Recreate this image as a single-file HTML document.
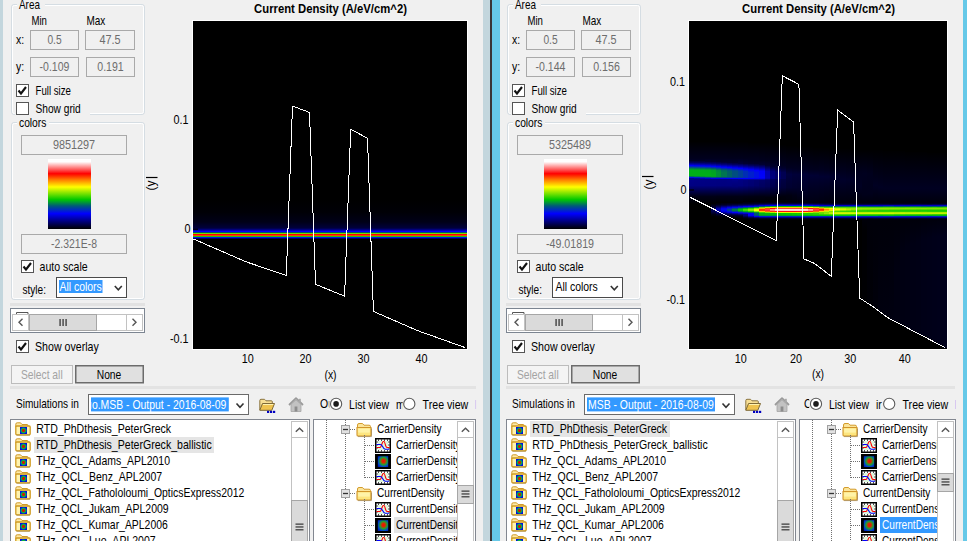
<!DOCTYPE html><html><head><meta charset="utf-8"><title>Current Density viewer</title><style>html,body{margin:0;padding:0;background:#f0f0f0;width:967px;height:541px;overflow:hidden}text{font-family:"Liberation Sans", sans-serif}</style></head><body><svg width="967" height="541" viewBox="0 0 967 541" style="display:block;font-family:'Liberation Sans', sans-serif"><defs><linearGradient id="grad" x1="0" y1="0" x2="0" y2="1"><stop offset="0" stop-color="#ffffff"/><stop offset="0.04" stop-color="#ffffff"/><stop offset="0.21" stop-color="#ff0000"/><stop offset="0.30" stop-color="#ff8000"/><stop offset="0.40" stop-color="#ffff00"/><stop offset="0.58" stop-color="#00c800"/><stop offset="0.67" stop-color="#005a78"/><stop offset="0.78" stop-color="#0000ff"/><stop offset="1" stop-color="#000000"/></linearGradient><radialGradient id="blob"><stop offset="0" stop-color="#ff0000"/><stop offset="0.35" stop-color="#b03000"/><stop offset="0.6" stop-color="#00c040"/><stop offset="1" stop-color="#0010e0"/></radialGradient><radialGradient id="blob2" r="0.75" cx="0.55" cy="0.45"><stop offset="0" stop-color="#ff0000"/><stop offset="0.22" stop-color="#d03000"/><stop offset="0.45" stop-color="#20a030"/><stop offset="0.72" stop-color="#0040d0"/><stop offset="1" stop-color="#0010a0"/></radialGradient><linearGradient id="lband" gradientUnits="userSpaceOnUse" x1="0" y1="200" x2="0" y2="240"><stop offset="0.0000" stop-color="#000000"/><stop offset="0.3000" stop-color="#000006"/><stop offset="0.5500" stop-color="#000018"/><stop offset="0.7000" stop-color="#00003c"/><stop offset="0.7500" stop-color="#000090"/><stop offset="0.7875" stop-color="#0000ff"/><stop offset="0.8150" stop-color="#006050"/><stop offset="0.8325" stop-color="#30d000"/><stop offset="0.8475" stop-color="#ffff00"/><stop offset="0.8625" stop-color="#ff0000"/><stop offset="0.8825" stop-color="#ff0000"/><stop offset="0.9000" stop-color="#f0f000"/><stop offset="0.9150" stop-color="#00c000"/><stop offset="0.9300" stop-color="#0030d0"/><stop offset="0.9450" stop-color="#0000ff"/><stop offset="0.9650" stop-color="#000050"/><stop offset="0.9800" stop-color="#000000"/><stop offset="1.0000" stop-color="#000000"/></linearGradient><linearGradient id="h0" x1="0" y1="0" x2="0" y2="1"><stop offset="0.008" stop-color="#000002"/><stop offset="0.266" stop-color="#00001e"/><stop offset="0.298" stop-color="#000027"/><stop offset="0.331" stop-color="#00005f"/><stop offset="0.363" stop-color="#0000bb"/><stop offset="0.379" stop-color="#0000f5"/><stop offset="0.395" stop-color="#0024c4"/><stop offset="0.427" stop-color="#007b4c"/><stop offset="0.444" stop-color="#009f28"/><stop offset="0.460" stop-color="#00af18"/><stop offset="0.540" stop-color="#00af18"/><stop offset="0.556" stop-color="#007255"/><stop offset="0.573" stop-color="#000ee7"/><stop offset="0.589" stop-color="#000090"/><stop offset="0.621" stop-color="#000088"/><stop offset="0.702" stop-color="#000082"/><stop offset="0.879" stop-color="#000016"/><stop offset="0.992" stop-color="#000002"/></linearGradient><linearGradient id="h1" x1="0" y1="0" x2="0" y2="1"><stop offset="0.008" stop-color="#000002"/><stop offset="0.266" stop-color="#00001e"/><stop offset="0.298" stop-color="#000026"/><stop offset="0.331" stop-color="#000059"/><stop offset="0.363" stop-color="#0000b2"/><stop offset="0.379" stop-color="#0000eb"/><stop offset="0.395" stop-color="#001dcf"/><stop offset="0.427" stop-color="#007354"/><stop offset="0.444" stop-color="#009b2c"/><stop offset="0.460" stop-color="#00ae19"/><stop offset="0.540" stop-color="#00af18"/><stop offset="0.556" stop-color="#008344"/><stop offset="0.573" stop-color="#001ecd"/><stop offset="0.589" stop-color="#0000a3"/><stop offset="0.605" stop-color="#000086"/><stop offset="0.702" stop-color="#000081"/><stop offset="0.879" stop-color="#000016"/><stop offset="0.992" stop-color="#000002"/></linearGradient><linearGradient id="h2" x1="0" y1="0" x2="0" y2="1"><stop offset="0.008" stop-color="#000002"/><stop offset="0.266" stop-color="#00001e"/><stop offset="0.298" stop-color="#000026"/><stop offset="0.331" stop-color="#000053"/><stop offset="0.363" stop-color="#0000aa"/><stop offset="0.379" stop-color="#0000e2"/><stop offset="0.395" stop-color="#0016da"/><stop offset="0.427" stop-color="#006c5b"/><stop offset="0.444" stop-color="#009631"/><stop offset="0.460" stop-color="#00ac1b"/><stop offset="0.540" stop-color="#00af18"/><stop offset="0.556" stop-color="#009235"/><stop offset="0.573" stop-color="#002eb3"/><stop offset="0.589" stop-color="#0000b7"/><stop offset="0.605" stop-color="#000085"/><stop offset="0.702" stop-color="#000081"/><stop offset="0.879" stop-color="#000016"/><stop offset="0.992" stop-color="#000002"/></linearGradient><linearGradient id="h3" x1="0" y1="0" x2="0" y2="1"><stop offset="0.008" stop-color="#000002"/><stop offset="0.266" stop-color="#00001e"/><stop offset="0.315" stop-color="#000032"/><stop offset="0.347" stop-color="#000073"/><stop offset="0.379" stop-color="#0000d8"/><stop offset="0.395" stop-color="#000fe6"/><stop offset="0.427" stop-color="#006364"/><stop offset="0.444" stop-color="#009037"/><stop offset="0.460" stop-color="#00aa1d"/><stop offset="0.540" stop-color="#00af18"/><stop offset="0.556" stop-color="#009e29"/><stop offset="0.573" stop-color="#003e9a"/><stop offset="0.589" stop-color="#0000cc"/><stop offset="0.605" stop-color="#000084"/><stop offset="0.702" stop-color="#000080"/><stop offset="0.879" stop-color="#000016"/><stop offset="0.992" stop-color="#000002"/></linearGradient><linearGradient id="h4" x1="0" y1="0" x2="0" y2="1"><stop offset="0.007" stop-color="#000002"/><stop offset="0.220" stop-color="#00001e"/><stop offset="0.260" stop-color="#00002e"/><stop offset="0.287" stop-color="#00006b"/><stop offset="0.327" stop-color="#0006f5"/><stop offset="0.353" stop-color="#005772"/><stop offset="0.367" stop-color="#008443"/><stop offset="0.380" stop-color="#00a126"/><stop offset="0.447" stop-color="#00a91e"/><stop offset="0.460" stop-color="#00a126"/><stop offset="0.487" stop-color="#0000df"/><stop offset="0.500" stop-color="#000084"/><stop offset="0.580" stop-color="#000080"/><stop offset="0.727" stop-color="#000016"/><stop offset="0.820" stop-color="#000004"/><stop offset="0.860" stop-color="#000027"/><stop offset="0.900" stop-color="#00005b"/><stop offset="0.927" stop-color="#00004c"/><stop offset="0.967" stop-color="#000013"/><stop offset="0.993" stop-color="#000003"/></linearGradient><linearGradient id="h5" x1="0" y1="0" x2="0" y2="1"><stop offset="0.007" stop-color="#000002"/><stop offset="0.217" stop-color="#00001e"/><stop offset="0.257" stop-color="#00002a"/><stop offset="0.283" stop-color="#00005f"/><stop offset="0.309" stop-color="#0000b9"/><stop offset="0.322" stop-color="#0000f0"/><stop offset="0.336" stop-color="#001ece"/><stop offset="0.362" stop-color="#006760"/><stop offset="0.375" stop-color="#008542"/><stop offset="0.401" stop-color="#009037"/><stop offset="0.454" stop-color="#008d3a"/><stop offset="0.467" stop-color="#004a87"/><stop offset="0.480" stop-color="#0000e8"/><stop offset="0.493" stop-color="#000083"/><stop offset="0.572" stop-color="#00007f"/><stop offset="0.717" stop-color="#000015"/><stop offset="0.796" stop-color="#000003"/><stop offset="0.822" stop-color="#000015"/><stop offset="0.849" stop-color="#00004f"/><stop offset="0.875" stop-color="#00009f"/><stop offset="0.888" stop-color="#0000b6"/><stop offset="0.901" stop-color="#0000b3"/><stop offset="0.928" stop-color="#000070"/><stop offset="0.954" stop-color="#000027"/><stop offset="0.980" stop-color="#000007"/><stop offset="0.993" stop-color="#000002"/></linearGradient><linearGradient id="h6" x1="0" y1="0" x2="0" y2="1"><stop offset="0.007" stop-color="#000002"/><stop offset="0.217" stop-color="#00001e"/><stop offset="0.257" stop-color="#00002a"/><stop offset="0.270" stop-color="#000038"/><stop offset="0.296" stop-color="#00007a"/><stop offset="0.322" stop-color="#0000da"/><stop offset="0.336" stop-color="#000ceb"/><stop offset="0.362" stop-color="#004f7f"/><stop offset="0.375" stop-color="#00695e"/><stop offset="0.401" stop-color="#007651"/><stop offset="0.454" stop-color="#007651"/><stop offset="0.467" stop-color="#00478b"/><stop offset="0.480" stop-color="#0000f0"/><stop offset="0.493" stop-color="#000083"/><stop offset="0.572" stop-color="#00007e"/><stop offset="0.717" stop-color="#000015"/><stop offset="0.796" stop-color="#000005"/><stop offset="0.822" stop-color="#000020"/><stop offset="0.836" stop-color="#000042"/><stop offset="0.875" stop-color="#0000ee"/><stop offset="0.888" stop-color="#000bec"/><stop offset="0.901" stop-color="#0008f0"/><stop offset="0.914" stop-color="#0000e3"/><stop offset="0.941" stop-color="#00006a"/><stop offset="0.954" stop-color="#00003a"/><stop offset="0.967" stop-color="#00001b"/><stop offset="0.993" stop-color="#000004"/></linearGradient><linearGradient id="h7" x1="0" y1="0" x2="0" y2="1"><stop offset="0.007" stop-color="#000002"/><stop offset="0.217" stop-color="#00001d"/><stop offset="0.270" stop-color="#000031"/><stop offset="0.296" stop-color="#00006d"/><stop offset="0.336" stop-color="#0000f9"/><stop offset="0.362" stop-color="#003d9c"/><stop offset="0.375" stop-color="#005379"/><stop offset="0.388" stop-color="#005f68"/><stop offset="0.454" stop-color="#006067"/><stop offset="0.467" stop-color="#004491"/><stop offset="0.480" stop-color="#0000f6"/><stop offset="0.493" stop-color="#000086"/><stop offset="0.572" stop-color="#00007e"/><stop offset="0.717" stop-color="#000015"/><stop offset="0.796" stop-color="#000006"/><stop offset="0.822" stop-color="#000029"/><stop offset="0.836" stop-color="#000054"/><stop offset="0.862" stop-color="#0000e5"/><stop offset="0.875" stop-color="#0021c9"/><stop offset="0.888" stop-color="#003f98"/><stop offset="0.901" stop-color="#003b9e"/><stop offset="0.914" stop-color="#0018d7"/><stop offset="0.928" stop-color="#0000d4"/><stop offset="0.941" stop-color="#000087"/><stop offset="0.954" stop-color="#00004a"/><stop offset="0.967" stop-color="#000023"/><stop offset="0.993" stop-color="#000005"/></linearGradient><linearGradient id="h8" x1="0" y1="0" x2="0" y2="1"><stop offset="0.007" stop-color="#000002"/><stop offset="0.217" stop-color="#00001d"/><stop offset="0.270" stop-color="#00002e"/><stop offset="0.296" stop-color="#000061"/><stop offset="0.336" stop-color="#0000e4"/><stop offset="0.349" stop-color="#000ee7"/><stop offset="0.375" stop-color="#004294"/><stop offset="0.388" stop-color="#004d81"/><stop offset="0.454" stop-color="#004f7f"/><stop offset="0.467" stop-color="#003e9a"/><stop offset="0.480" stop-color="#0000fb"/><stop offset="0.493" stop-color="#00008e"/><stop offset="0.520" stop-color="#000085"/><stop offset="0.586" stop-color="#000076"/><stop offset="0.717" stop-color="#000015"/><stop offset="0.796" stop-color="#000007"/><stop offset="0.809" stop-color="#000015"/><stop offset="0.822" stop-color="#000031"/><stop offset="0.836" stop-color="#000066"/><stop offset="0.849" stop-color="#0000b4"/><stop offset="0.862" stop-color="#000ee7"/><stop offset="0.875" stop-color="#004c83"/><stop offset="0.888" stop-color="#007c4b"/><stop offset="0.901" stop-color="#007552"/><stop offset="0.914" stop-color="#004194"/><stop offset="0.928" stop-color="#0000fd"/><stop offset="0.941" stop-color="#0000a2"/><stop offset="0.954" stop-color="#000059"/><stop offset="0.967" stop-color="#00002a"/><stop offset="0.993" stop-color="#000006"/></linearGradient><linearGradient id="h9" x1="0" y1="0" x2="0" y2="1"><stop offset="0.006" stop-color="#000002"/><stop offset="0.214" stop-color="#00001d"/><stop offset="0.279" stop-color="#00003b"/><stop offset="0.318" stop-color="#0000a3"/><stop offset="0.344" stop-color="#0000fd"/><stop offset="0.370" stop-color="#0031af"/><stop offset="0.383" stop-color="#003e9a"/><stop offset="0.448" stop-color="#004096"/><stop offset="0.461" stop-color="#0036a6"/><stop offset="0.474" stop-color="#0000fd"/><stop offset="0.487" stop-color="#000096"/><stop offset="0.500" stop-color="#000082"/><stop offset="0.565" stop-color="#00007c"/><stop offset="0.708" stop-color="#000015"/><stop offset="0.786" stop-color="#000008"/><stop offset="0.799" stop-color="#000018"/><stop offset="0.812" stop-color="#00003a"/><stop offset="0.825" stop-color="#000077"/><stop offset="0.838" stop-color="#0000d2"/><stop offset="0.851" stop-color="#002fb2"/><stop offset="0.864" stop-color="#008641"/><stop offset="0.877" stop-color="#00c502"/><stop offset="0.890" stop-color="#00be09"/><stop offset="0.903" stop-color="#007354"/><stop offset="0.916" stop-color="#001fcc"/><stop offset="0.929" stop-color="#0000be"/><stop offset="0.942" stop-color="#000068"/><stop offset="0.955" stop-color="#000031"/><stop offset="0.968" stop-color="#000014"/><stop offset="0.994" stop-color="#000002"/></linearGradient><linearGradient id="h10" x1="0" y1="0" x2="0" y2="1"><stop offset="0.006" stop-color="#000002"/><stop offset="0.212" stop-color="#00001c"/><stop offset="0.276" stop-color="#000033"/><stop offset="0.314" stop-color="#000091"/><stop offset="0.340" stop-color="#0000e5"/><stop offset="0.353" stop-color="#0009ef"/><stop offset="0.378" stop-color="#002db6"/><stop offset="0.442" stop-color="#0030b0"/><stop offset="0.455" stop-color="#002bb8"/><stop offset="0.468" stop-color="#0000fc"/><stop offset="0.481" stop-color="#00009b"/><stop offset="0.494" stop-color="#00007c"/><stop offset="0.558" stop-color="#000077"/><stop offset="0.699" stop-color="#000014"/><stop offset="0.763" stop-color="#000004"/><stop offset="0.788" stop-color="#00001b"/><stop offset="0.801" stop-color="#000041"/><stop offset="0.814" stop-color="#000086"/><stop offset="0.827" stop-color="#0000ed"/><stop offset="0.840" stop-color="#004c84"/><stop offset="0.853" stop-color="#00bf08"/><stop offset="0.865" stop-color="#48d700"/><stop offset="0.878" stop-color="#3fd500"/><stop offset="0.891" stop-color="#00aa1d"/><stop offset="0.904" stop-color="#003aa1"/><stop offset="0.917" stop-color="#0000d6"/><stop offset="0.929" stop-color="#000084"/><stop offset="0.942" stop-color="#00007b"/><stop offset="0.968" stop-color="#000024"/><stop offset="0.981" stop-color="#00000b"/><stop offset="0.994" stop-color="#000002"/></linearGradient><linearGradient id="h11" x1="0" y1="0" x2="0" y2="1"><stop offset="0.006" stop-color="#000002"/><stop offset="0.214" stop-color="#00001e"/><stop offset="0.266" stop-color="#00002e"/><stop offset="0.292" stop-color="#00005f"/><stop offset="0.344" stop-color="#0000f4"/><stop offset="0.383" stop-color="#0020ca"/><stop offset="0.448" stop-color="#001ecd"/><stop offset="0.461" stop-color="#0000f7"/><stop offset="0.474" stop-color="#00009e"/><stop offset="0.487" stop-color="#000076"/><stop offset="0.552" stop-color="#000071"/><stop offset="0.695" stop-color="#000013"/><stop offset="0.760" stop-color="#000003"/><stop offset="0.786" stop-color="#00001e"/><stop offset="0.799" stop-color="#000049"/><stop offset="0.812" stop-color="#000095"/><stop offset="0.825" stop-color="#0006f4"/><stop offset="0.838" stop-color="#007057"/><stop offset="0.851" stop-color="#38d400"/><stop offset="0.864" stop-color="#94e800"/><stop offset="0.877" stop-color="#89e500"/><stop offset="0.890" stop-color="#1cce00"/><stop offset="0.903" stop-color="#005575"/><stop offset="0.916" stop-color="#0001fc"/><stop offset="0.942" stop-color="#0000f0"/><stop offset="0.968" stop-color="#000047"/><stop offset="0.981" stop-color="#000016"/><stop offset="0.994" stop-color="#000004"/></linearGradient><linearGradient id="h12" x1="0" y1="0" x2="0" y2="1"><stop offset="0.006" stop-color="#000002"/><stop offset="0.227" stop-color="#000020"/><stop offset="0.266" stop-color="#00002c"/><stop offset="0.292" stop-color="#000054"/><stop offset="0.357" stop-color="#0000fb"/><stop offset="0.383" stop-color="#0011e2"/><stop offset="0.448" stop-color="#0011e2"/><stop offset="0.461" stop-color="#0000f1"/><stop offset="0.474" stop-color="#0000a1"/><stop offset="0.487" stop-color="#000070"/><stop offset="0.552" stop-color="#00006b"/><stop offset="0.695" stop-color="#000012"/><stop offset="0.760" stop-color="#000004"/><stop offset="0.786" stop-color="#000023"/><stop offset="0.799" stop-color="#000054"/><stop offset="0.812" stop-color="#0000ad"/><stop offset="0.825" stop-color="#0024c4"/><stop offset="0.838" stop-color="#00b413"/><stop offset="0.851" stop-color="#a0ea00"/><stop offset="0.864" stop-color="#fff400"/><stop offset="0.877" stop-color="#fdfe00"/><stop offset="0.890" stop-color="#7fe300"/><stop offset="0.903" stop-color="#009136"/><stop offset="0.916" stop-color="#005a6e"/><stop offset="0.929" stop-color="#005a6e"/><stop offset="0.942" stop-color="#00488a"/><stop offset="0.955" stop-color="#0000eb"/><stop offset="0.968" stop-color="#00006a"/><stop offset="0.981" stop-color="#000021"/><stop offset="0.994" stop-color="#000007"/></linearGradient><linearGradient id="h13" x1="0" y1="0" x2="0" y2="1"><stop offset="0.006" stop-color="#000002"/><stop offset="0.227" stop-color="#00001e"/><stop offset="0.279" stop-color="#000033"/><stop offset="0.318" stop-color="#000085"/><stop offset="0.357" stop-color="#0000e5"/><stop offset="0.370" stop-color="#0000f9"/><stop offset="0.448" stop-color="#0003fa"/><stop offset="0.461" stop-color="#0000e9"/><stop offset="0.474" stop-color="#0000a2"/><stop offset="0.487" stop-color="#00006a"/><stop offset="0.565" stop-color="#00005f"/><stop offset="0.695" stop-color="#000011"/><stop offset="0.760" stop-color="#000005"/><stop offset="0.773" stop-color="#000010"/><stop offset="0.786" stop-color="#00002c"/><stop offset="0.799" stop-color="#000069"/><stop offset="0.812" stop-color="#0000d7"/><stop offset="0.825" stop-color="#00586f"/><stop offset="0.838" stop-color="#74e100"/><stop offset="0.851" stop-color="#ffaa00"/><stop offset="0.864" stop-color="#ff2d00"/><stop offset="0.877" stop-color="#ff3c00"/><stop offset="0.890" stop-color="#ffd000"/><stop offset="0.903" stop-color="#42d600"/><stop offset="0.916" stop-color="#00b116"/><stop offset="0.929" stop-color="#00b116"/><stop offset="0.942" stop-color="#009136"/><stop offset="0.955" stop-color="#0016da"/><stop offset="0.968" stop-color="#000081"/><stop offset="0.981" stop-color="#000028"/><stop offset="0.994" stop-color="#000008"/></linearGradient><linearGradient id="h14" x1="0" y1="0" x2="0" y2="1"><stop offset="0.006" stop-color="#000002"/><stop offset="0.227" stop-color="#00001c"/><stop offset="0.292" stop-color="#000031"/><stop offset="0.370" stop-color="#0000ae"/><stop offset="0.448" stop-color="#0000b7"/><stop offset="0.461" stop-color="#0000ab"/><stop offset="0.474" stop-color="#00007c"/><stop offset="0.487" stop-color="#000062"/><stop offset="0.565" stop-color="#000058"/><stop offset="0.708" stop-color="#00000c"/><stop offset="0.760" stop-color="#000005"/><stop offset="0.773" stop-color="#000011"/><stop offset="0.786" stop-color="#000031"/><stop offset="0.799" stop-color="#000074"/><stop offset="0.812" stop-color="#0000ee"/><stop offset="0.825" stop-color="#008443"/><stop offset="0.838" stop-color="#c1f100"/><stop offset="0.851" stop-color="#ff4a00"/><stop offset="0.864" stop-color="#ff4343"/><stop offset="0.877" stop-color="#ff3232"/><stop offset="0.890" stop-color="#ff7400"/><stop offset="0.903" stop-color="#89e500"/><stop offset="0.916" stop-color="#00b611"/><stop offset="0.929" stop-color="#00b611"/><stop offset="0.942" stop-color="#009631"/><stop offset="0.955" stop-color="#0018d7"/><stop offset="0.968" stop-color="#000083"/><stop offset="0.981" stop-color="#000028"/><stop offset="0.994" stop-color="#000008"/></linearGradient><linearGradient id="h15" x1="0" y1="0" x2="0" y2="1"><stop offset="0.007" stop-color="#000002"/><stop offset="0.243" stop-color="#00001f"/><stop offset="0.296" stop-color="#00002d"/><stop offset="0.362" stop-color="#000078"/><stop offset="0.441" stop-color="#000080"/><stop offset="0.454" stop-color="#00007a"/><stop offset="0.467" stop-color="#00005c"/><stop offset="0.559" stop-color="#00004f"/><stop offset="0.704" stop-color="#00000a"/><stop offset="0.757" stop-color="#000006"/><stop offset="0.770" stop-color="#000013"/><stop offset="0.783" stop-color="#000034"/><stop offset="0.796" stop-color="#00007d"/><stop offset="0.809" stop-color="#0000fd"/><stop offset="0.822" stop-color="#00a324"/><stop offset="0.836" stop-color="#f9fd00"/><stop offset="0.849" stop-color="#ff0300"/><stop offset="0.862" stop-color="#ff9898"/><stop offset="0.875" stop-color="#ff8686"/><stop offset="0.888" stop-color="#ff3100"/><stop offset="0.901" stop-color="#bef100"/><stop offset="0.914" stop-color="#00bc0b"/><stop offset="0.928" stop-color="#00bc0b"/><stop offset="0.941" stop-color="#009b2c"/><stop offset="0.954" stop-color="#001bd3"/><stop offset="0.967" stop-color="#000084"/><stop offset="0.980" stop-color="#000029"/><stop offset="0.993" stop-color="#000008"/></linearGradient><linearGradient id="h16" x1="0" y1="0" x2="0" y2="1"><stop offset="0.007" stop-color="#000002"/><stop offset="0.260" stop-color="#000022"/><stop offset="0.300" stop-color="#000030"/><stop offset="0.367" stop-color="#000068"/><stop offset="0.447" stop-color="#000067"/><stop offset="0.460" stop-color="#000051"/><stop offset="0.567" stop-color="#000041"/><stop offset="0.700" stop-color="#000009"/><stop offset="0.753" stop-color="#000006"/><stop offset="0.767" stop-color="#000014"/><stop offset="0.780" stop-color="#000037"/><stop offset="0.793" stop-color="#000084"/><stop offset="0.807" stop-color="#000aed"/><stop offset="0.820" stop-color="#00be09"/><stop offset="0.833" stop-color="#ffd600"/><stop offset="0.847" stop-color="#ff3b3b"/><stop offset="0.860" stop-color="#ffe1e1"/><stop offset="0.873" stop-color="#ffcdcd"/><stop offset="0.887" stop-color="#ff0808"/><stop offset="0.900" stop-color="#ebfa00"/><stop offset="0.913" stop-color="#00c106"/><stop offset="0.927" stop-color="#00c106"/><stop offset="0.940" stop-color="#00a027"/><stop offset="0.953" stop-color="#001dcf"/><stop offset="0.967" stop-color="#000086"/><stop offset="0.980" stop-color="#000029"/><stop offset="0.993" stop-color="#000008"/></linearGradient><linearGradient id="h17" x1="0" y1="0" x2="0" y2="1"><stop offset="0.007" stop-color="#000002"/><stop offset="0.273" stop-color="#000020"/><stop offset="0.313" stop-color="#00002f"/><stop offset="0.367" stop-color="#000052"/><stop offset="0.447" stop-color="#000053"/><stop offset="0.460" stop-color="#000044"/><stop offset="0.567" stop-color="#000039"/><stop offset="0.687" stop-color="#00000d"/><stop offset="0.753" stop-color="#000008"/><stop offset="0.767" stop-color="#000014"/><stop offset="0.780" stop-color="#000037"/><stop offset="0.793" stop-color="#000084"/><stop offset="0.807" stop-color="#000aed"/><stop offset="0.820" stop-color="#00be09"/><stop offset="0.833" stop-color="#ffd600"/><stop offset="0.847" stop-color="#ff3b3b"/><stop offset="0.860" stop-color="#ffe1e1"/><stop offset="0.873" stop-color="#ffcdcd"/><stop offset="0.887" stop-color="#ff0808"/><stop offset="0.900" stop-color="#ebfa00"/><stop offset="0.913" stop-color="#00c700"/><stop offset="0.927" stop-color="#00c700"/><stop offset="0.940" stop-color="#00a522"/><stop offset="0.953" stop-color="#001fcc"/><stop offset="0.967" stop-color="#000087"/><stop offset="0.980" stop-color="#000029"/><stop offset="0.993" stop-color="#000008"/></linearGradient><linearGradient id="h18" x1="0" y1="0" x2="0" y2="1"><stop offset="0.007" stop-color="#000002"/><stop offset="0.291" stop-color="#000020"/><stop offset="0.385" stop-color="#00003e"/><stop offset="0.561" stop-color="#000030"/><stop offset="0.669" stop-color="#000011"/><stop offset="0.750" stop-color="#00000a"/><stop offset="0.764" stop-color="#000014"/><stop offset="0.777" stop-color="#000037"/><stop offset="0.791" stop-color="#000084"/><stop offset="0.804" stop-color="#000aed"/><stop offset="0.818" stop-color="#00be09"/><stop offset="0.831" stop-color="#ffd600"/><stop offset="0.845" stop-color="#ff3b3b"/><stop offset="0.858" stop-color="#ffe1e1"/><stop offset="0.872" stop-color="#ffcdcd"/><stop offset="0.885" stop-color="#ff0808"/><stop offset="0.899" stop-color="#ebfa00"/><stop offset="0.912" stop-color="#05c900"/><stop offset="0.926" stop-color="#05c900"/><stop offset="0.939" stop-color="#00aa1d"/><stop offset="0.953" stop-color="#0021c8"/><stop offset="0.966" stop-color="#000088"/><stop offset="0.980" stop-color="#00002a"/><stop offset="0.993" stop-color="#000009"/></linearGradient><linearGradient id="h19" x1="0" y1="0" x2="0" y2="1"><stop offset="0.007" stop-color="#000002"/><stop offset="0.304" stop-color="#000021"/><stop offset="0.385" stop-color="#000038"/><stop offset="0.561" stop-color="#00002d"/><stop offset="0.669" stop-color="#000015"/><stop offset="0.750" stop-color="#00000c"/><stop offset="0.764" stop-color="#000014"/><stop offset="0.777" stop-color="#000037"/><stop offset="0.791" stop-color="#000084"/><stop offset="0.804" stop-color="#000aed"/><stop offset="0.818" stop-color="#00be09"/><stop offset="0.831" stop-color="#ffd600"/><stop offset="0.845" stop-color="#ff3b3b"/><stop offset="0.858" stop-color="#ffe1e1"/><stop offset="0.872" stop-color="#ffcdcd"/><stop offset="0.885" stop-color="#ff0808"/><stop offset="0.899" stop-color="#ebfa00"/><stop offset="0.912" stop-color="#0cca00"/><stop offset="0.926" stop-color="#0cca00"/><stop offset="0.939" stop-color="#00b017"/><stop offset="0.953" stop-color="#0024c4"/><stop offset="0.966" stop-color="#00008a"/><stop offset="0.980" stop-color="#00002a"/><stop offset="0.993" stop-color="#000009"/></linearGradient><linearGradient id="h20" x1="0" y1="0" x2="0" y2="1"><stop offset="0.007" stop-color="#000002"/><stop offset="0.308" stop-color="#000022"/><stop offset="0.377" stop-color="#000037"/><stop offset="0.555" stop-color="#00002b"/><stop offset="0.747" stop-color="#00000e"/><stop offset="0.760" stop-color="#000014"/><stop offset="0.774" stop-color="#000037"/><stop offset="0.788" stop-color="#000084"/><stop offset="0.801" stop-color="#000aed"/><stop offset="0.815" stop-color="#00be09"/><stop offset="0.829" stop-color="#ffd600"/><stop offset="0.842" stop-color="#ff3b3b"/><stop offset="0.856" stop-color="#ffe1e1"/><stop offset="0.870" stop-color="#ffcdcd"/><stop offset="0.884" stop-color="#ff0808"/><stop offset="0.897" stop-color="#ebfa00"/><stop offset="0.911" stop-color="#12cb00"/><stop offset="0.925" stop-color="#12cb00"/><stop offset="0.938" stop-color="#00b512"/><stop offset="0.952" stop-color="#0026c1"/><stop offset="0.966" stop-color="#00008b"/><stop offset="0.979" stop-color="#00002b"/><stop offset="0.993" stop-color="#000009"/></linearGradient><linearGradient id="h21" x1="0" y1="0" x2="0" y2="1"><stop offset="0.007" stop-color="#000002"/><stop offset="0.308" stop-color="#000020"/><stop offset="0.377" stop-color="#000035"/><stop offset="0.555" stop-color="#000029"/><stop offset="0.760" stop-color="#000014"/><stop offset="0.774" stop-color="#000037"/><stop offset="0.788" stop-color="#000084"/><stop offset="0.801" stop-color="#000aed"/><stop offset="0.815" stop-color="#00be09"/><stop offset="0.829" stop-color="#ffd600"/><stop offset="0.842" stop-color="#ff3b3b"/><stop offset="0.856" stop-color="#ffe1e1"/><stop offset="0.870" stop-color="#ffcdcd"/><stop offset="0.884" stop-color="#ff0808"/><stop offset="0.897" stop-color="#ebfa00"/><stop offset="0.911" stop-color="#18cd00"/><stop offset="0.925" stop-color="#18cd00"/><stop offset="0.938" stop-color="#00ba0d"/><stop offset="0.952" stop-color="#0028bd"/><stop offset="0.966" stop-color="#00008d"/><stop offset="0.979" stop-color="#00002b"/><stop offset="0.993" stop-color="#000009"/></linearGradient><linearGradient id="h22" x1="0" y1="0" x2="0" y2="1"><stop offset="0.007" stop-color="#000002"/><stop offset="0.308" stop-color="#00001e"/><stop offset="0.390" stop-color="#000033"/><stop offset="0.568" stop-color="#000023"/><stop offset="0.760" stop-color="#000013"/><stop offset="0.774" stop-color="#000035"/><stop offset="0.788" stop-color="#00007e"/><stop offset="0.801" stop-color="#0003fa"/><stop offset="0.815" stop-color="#00a91e"/><stop offset="0.829" stop-color="#fff900"/><stop offset="0.842" stop-color="#ff0a0a"/><stop offset="0.856" stop-color="#ffa9a9"/><stop offset="0.870" stop-color="#ff9696"/><stop offset="0.884" stop-color="#ff2400"/><stop offset="0.897" stop-color="#c8f300"/><stop offset="0.911" stop-color="#1fce00"/><stop offset="0.925" stop-color="#1fce00"/><stop offset="0.938" stop-color="#00bf08"/><stop offset="0.952" stop-color="#002ab9"/><stop offset="0.966" stop-color="#00008e"/><stop offset="0.979" stop-color="#00002c"/><stop offset="0.993" stop-color="#000009"/></linearGradient><linearGradient id="h23" x1="0" y1="0" x2="0" y2="1"><stop offset="0.007" stop-color="#000002"/><stop offset="0.299" stop-color="#00001d"/><stop offset="0.382" stop-color="#000032"/><stop offset="0.757" stop-color="#000012"/><stop offset="0.771" stop-color="#000031"/><stop offset="0.785" stop-color="#000075"/><stop offset="0.799" stop-color="#0000ef"/><stop offset="0.812" stop-color="#008542"/><stop offset="0.826" stop-color="#c5f200"/><stop offset="0.840" stop-color="#ff4200"/><stop offset="0.854" stop-color="#ff4949"/><stop offset="0.868" stop-color="#ff3535"/><stop offset="0.882" stop-color="#ff7100"/><stop offset="0.896" stop-color="#92e700"/><stop offset="0.910" stop-color="#2ed100"/><stop offset="0.924" stop-color="#27d000"/><stop offset="0.938" stop-color="#00c403"/><stop offset="0.951" stop-color="#002db6"/><stop offset="0.965" stop-color="#000090"/><stop offset="0.979" stop-color="#00002c"/><stop offset="0.993" stop-color="#000009"/></linearGradient><linearGradient id="h24" x1="0" y1="0" x2="0" y2="1"><stop offset="0.007" stop-color="#000002"/><stop offset="0.312" stop-color="#000020"/><stop offset="0.396" stop-color="#000030"/><stop offset="0.757" stop-color="#000010"/><stop offset="0.771" stop-color="#00002b"/><stop offset="0.785" stop-color="#000067"/><stop offset="0.799" stop-color="#0000d4"/><stop offset="0.812" stop-color="#006a5d"/><stop offset="0.826" stop-color="#7be200"/><stop offset="0.840" stop-color="#ff9100"/><stop offset="0.854" stop-color="#ff2600"/><stop offset="0.868" stop-color="#ff4700"/><stop offset="0.882" stop-color="#ffd500"/><stop offset="0.896" stop-color="#6ade00"/><stop offset="0.910" stop-color="#64dd00"/><stop offset="0.938" stop-color="#00c800"/><stop offset="0.951" stop-color="#002eb3"/><stop offset="0.965" stop-color="#000091"/><stop offset="0.979" stop-color="#00002c"/><stop offset="0.993" stop-color="#000009"/></linearGradient><linearGradient id="h25" x1="0" y1="0" x2="0" y2="1"><stop offset="0.007" stop-color="#000002"/><stop offset="0.312" stop-color="#00001e"/><stop offset="0.396" stop-color="#00002f"/><stop offset="0.757" stop-color="#00000e"/><stop offset="0.771" stop-color="#000026"/><stop offset="0.785" stop-color="#00005a"/><stop offset="0.799" stop-color="#0000cf"/><stop offset="0.812" stop-color="#006a5d"/><stop offset="0.826" stop-color="#42d600"/><stop offset="0.840" stop-color="#ffde00"/><stop offset="0.854" stop-color="#ff9100"/><stop offset="0.868" stop-color="#ffbf00"/><stop offset="0.882" stop-color="#c3f200"/><stop offset="0.896" stop-color="#83e400"/><stop offset="0.910" stop-color="#94e700"/><stop offset="0.924" stop-color="#3fd500"/><stop offset="0.938" stop-color="#00c601"/><stop offset="0.951" stop-color="#002db5"/><stop offset="0.965" stop-color="#000090"/><stop offset="0.979" stop-color="#00002c"/><stop offset="0.993" stop-color="#000009"/></linearGradient><linearGradient id="h26" x1="0" y1="0" x2="0" y2="1"><stop offset="0.007" stop-color="#000002"/><stop offset="0.303" stop-color="#00001c"/><stop offset="0.387" stop-color="#00002d"/><stop offset="0.754" stop-color="#00000d"/><stop offset="0.768" stop-color="#000022"/><stop offset="0.782" stop-color="#000051"/><stop offset="0.796" stop-color="#0000cf"/><stop offset="0.810" stop-color="#006a5d"/><stop offset="0.824" stop-color="#4fd900"/><stop offset="0.838" stop-color="#f3fc00"/><stop offset="0.852" stop-color="#ffd400"/><stop offset="0.866" stop-color="#ebfa00"/><stop offset="0.880" stop-color="#7ee300"/><stop offset="0.894" stop-color="#abed00"/><stop offset="0.908" stop-color="#c3f200"/><stop offset="0.923" stop-color="#48d700"/><stop offset="0.937" stop-color="#00c502"/><stop offset="0.951" stop-color="#002cb6"/><stop offset="0.965" stop-color="#000090"/><stop offset="0.979" stop-color="#00002c"/><stop offset="0.993" stop-color="#000009"/></linearGradient><linearGradient id="h27" x1="0" y1="0" x2="0" y2="1"><stop offset="0.007" stop-color="#000002"/><stop offset="0.303" stop-color="#00001a"/><stop offset="0.387" stop-color="#00002b"/><stop offset="0.754" stop-color="#00000d"/><stop offset="0.768" stop-color="#00001f"/><stop offset="0.782" stop-color="#00004b"/><stop offset="0.796" stop-color="#0000ce"/><stop offset="0.810" stop-color="#00695e"/><stop offset="0.824" stop-color="#54da00"/><stop offset="0.838" stop-color="#cef400"/><stop offset="0.852" stop-color="#f7fd00"/><stop offset="0.866" stop-color="#afed00"/><stop offset="0.880" stop-color="#4dd800"/><stop offset="0.894" stop-color="#c0f100"/><stop offset="0.908" stop-color="#dcf700"/><stop offset="0.923" stop-color="#4cd800"/><stop offset="0.937" stop-color="#00c304"/><stop offset="0.951" stop-color="#002bb8"/><stop offset="0.965" stop-color="#00008f"/><stop offset="0.979" stop-color="#00002c"/><stop offset="0.993" stop-color="#000009"/></linearGradient><linearGradient id="h28" x1="0" y1="0" x2="0" y2="1"><stop offset="0.007" stop-color="#000002"/><stop offset="0.317" stop-color="#00001e"/><stop offset="0.430" stop-color="#00002a"/><stop offset="0.754" stop-color="#00000d"/><stop offset="0.768" stop-color="#00001e"/><stop offset="0.782" stop-color="#000049"/><stop offset="0.796" stop-color="#0000cd"/><stop offset="0.810" stop-color="#006760"/><stop offset="0.824" stop-color="#51d900"/><stop offset="0.838" stop-color="#b4ee00"/><stop offset="0.852" stop-color="#d9f600"/><stop offset="0.866" stop-color="#91e700"/><stop offset="0.880" stop-color="#39d400"/><stop offset="0.894" stop-color="#bdf000"/><stop offset="0.908" stop-color="#d9f600"/><stop offset="0.923" stop-color="#49d700"/><stop offset="0.937" stop-color="#00c106"/><stop offset="0.951" stop-color="#002bb9"/><stop offset="0.965" stop-color="#00008e"/><stop offset="0.979" stop-color="#00002c"/><stop offset="0.993" stop-color="#000009"/></linearGradient><linearGradient id="h29" x1="0" y1="0" x2="0" y2="1"><stop offset="0.007" stop-color="#000002"/><stop offset="0.317" stop-color="#00001c"/><stop offset="0.430" stop-color="#000028"/><stop offset="0.754" stop-color="#00000d"/><stop offset="0.768" stop-color="#00001d"/><stop offset="0.782" stop-color="#000049"/><stop offset="0.796" stop-color="#0000cc"/><stop offset="0.810" stop-color="#006562"/><stop offset="0.824" stop-color="#4fd900"/><stop offset="0.838" stop-color="#9be900"/><stop offset="0.852" stop-color="#bbf000"/><stop offset="0.880" stop-color="#37d300"/><stop offset="0.894" stop-color="#baf000"/><stop offset="0.908" stop-color="#d7f600"/><stop offset="0.923" stop-color="#47d700"/><stop offset="0.937" stop-color="#00bf08"/><stop offset="0.951" stop-color="#002abb"/><stop offset="0.965" stop-color="#00008e"/><stop offset="0.979" stop-color="#00002c"/><stop offset="0.993" stop-color="#000009"/></linearGradient><linearGradient id="h30" x1="0" y1="0" x2="0" y2="1"><stop offset="0.007" stop-color="#000002"/><stop offset="0.307" stop-color="#00001a"/><stop offset="0.421" stop-color="#000027"/><stop offset="0.750" stop-color="#00000d"/><stop offset="0.764" stop-color="#00001c"/><stop offset="0.779" stop-color="#000049"/><stop offset="0.793" stop-color="#0000cc"/><stop offset="0.807" stop-color="#006562"/><stop offset="0.821" stop-color="#4ed800"/><stop offset="0.836" stop-color="#9ae900"/><stop offset="0.850" stop-color="#9de900"/><stop offset="0.864" stop-color="#55da00"/><stop offset="0.879" stop-color="#35d300"/><stop offset="0.893" stop-color="#b9f000"/><stop offset="0.907" stop-color="#d5f600"/><stop offset="0.921" stop-color="#45d700"/><stop offset="0.936" stop-color="#00be09"/><stop offset="0.950" stop-color="#0029bb"/><stop offset="0.964" stop-color="#00008d"/><stop offset="0.979" stop-color="#00002b"/><stop offset="0.993" stop-color="#000009"/></linearGradient><linearGradient id="h31" x1="0" y1="0" x2="0" y2="1"><stop offset="0.007" stop-color="#000002"/><stop offset="0.321" stop-color="#00001d"/><stop offset="0.521" stop-color="#000022"/><stop offset="0.750" stop-color="#00000d"/><stop offset="0.764" stop-color="#00001a"/><stop offset="0.779" stop-color="#000049"/><stop offset="0.793" stop-color="#0000cb"/><stop offset="0.807" stop-color="#006463"/><stop offset="0.821" stop-color="#4dd800"/><stop offset="0.836" stop-color="#99e900"/><stop offset="0.850" stop-color="#7ee300"/><stop offset="0.864" stop-color="#37d400"/><stop offset="0.879" stop-color="#34d300"/><stop offset="0.893" stop-color="#b8ef00"/><stop offset="0.907" stop-color="#d5f500"/><stop offset="0.921" stop-color="#45d600"/><stop offset="0.936" stop-color="#00bd0a"/><stop offset="0.950" stop-color="#0029bc"/><stop offset="0.964" stop-color="#00008d"/><stop offset="0.979" stop-color="#00002b"/><stop offset="0.993" stop-color="#000009"/></linearGradient><linearGradient id="h32" x1="0" y1="0" x2="0" y2="1"><stop offset="0.003" stop-color="#000002"/><stop offset="0.156" stop-color="#00001f"/><stop offset="0.295" stop-color="#00001a"/><stop offset="0.348" stop-color="#00000d"/><stop offset="0.354" stop-color="#00001a"/><stop offset="0.361" stop-color="#000049"/><stop offset="0.368" stop-color="#0000cb"/><stop offset="0.374" stop-color="#006463"/><stop offset="0.381" stop-color="#4cd800"/><stop offset="0.387" stop-color="#98e800"/><stop offset="0.394" stop-color="#76e100"/><stop offset="0.401" stop-color="#30d200"/><stop offset="0.407" stop-color="#34d300"/><stop offset="0.414" stop-color="#b8ef00"/><stop offset="0.421" stop-color="#d4f500"/><stop offset="0.427" stop-color="#44d600"/><stop offset="0.434" stop-color="#00bc0b"/><stop offset="0.440" stop-color="#0029bc"/><stop offset="0.447" stop-color="#00008d"/><stop offset="0.454" stop-color="#00002b"/><stop offset="0.460" stop-color="#000009"/><stop offset="0.533" stop-color="#000003"/><stop offset="0.997" stop-color="#000003"/></linearGradient><linearGradient id="h33" x1="0" y1="0" x2="0" y2="1"><stop offset="0.003" stop-color="#000002"/><stop offset="0.152" stop-color="#00001d"/><stop offset="0.281" stop-color="#00001b"/><stop offset="0.339" stop-color="#00000d"/><stop offset="0.345" stop-color="#00001a"/><stop offset="0.352" stop-color="#000049"/><stop offset="0.358" stop-color="#0000cb"/><stop offset="0.365" stop-color="#006364"/><stop offset="0.371" stop-color="#4bd800"/><stop offset="0.377" stop-color="#98e800"/><stop offset="0.384" stop-color="#73e000"/><stop offset="0.390" stop-color="#2cd100"/><stop offset="0.397" stop-color="#33d300"/><stop offset="0.403" stop-color="#b7ef00"/><stop offset="0.410" stop-color="#d3f500"/><stop offset="0.416" stop-color="#43d600"/><stop offset="0.423" stop-color="#00bc0b"/><stop offset="0.429" stop-color="#0028bd"/><stop offset="0.435" stop-color="#00008d"/><stop offset="0.442" stop-color="#00002b"/><stop offset="0.448" stop-color="#000009"/><stop offset="0.997" stop-color="#000006"/></linearGradient><linearGradient id="h34" x1="0" y1="0" x2="0" y2="1"><stop offset="0.003" stop-color="#000002"/><stop offset="0.225" stop-color="#000022"/><stop offset="0.332" stop-color="#00000d"/><stop offset="0.339" stop-color="#00001a"/><stop offset="0.345" stop-color="#000049"/><stop offset="0.351" stop-color="#0000cb"/><stop offset="0.358" stop-color="#006364"/><stop offset="0.364" stop-color="#4ad800"/><stop offset="0.370" stop-color="#97e800"/><stop offset="0.377" stop-color="#6fe000"/><stop offset="0.383" stop-color="#29d000"/><stop offset="0.389" stop-color="#32d200"/><stop offset="0.396" stop-color="#b6ef00"/><stop offset="0.402" stop-color="#d2f500"/><stop offset="0.408" stop-color="#42d600"/><stop offset="0.415" stop-color="#00bb0c"/><stop offset="0.421" stop-color="#0028bd"/><stop offset="0.427" stop-color="#00008d"/><stop offset="0.434" stop-color="#00002b"/><stop offset="0.440" stop-color="#000009"/><stop offset="0.997" stop-color="#00000a"/></linearGradient><linearGradient id="h35" x1="0" y1="0" x2="0" y2="1"><stop offset="0.003" stop-color="#000002"/><stop offset="0.231" stop-color="#000022"/><stop offset="0.324" stop-color="#00000d"/><stop offset="0.330" stop-color="#00001a"/><stop offset="0.336" stop-color="#000049"/><stop offset="0.343" stop-color="#0000ca"/><stop offset="0.349" stop-color="#006265"/><stop offset="0.355" stop-color="#4ad800"/><stop offset="0.361" stop-color="#96e800"/><stop offset="0.367" stop-color="#6cdf00"/><stop offset="0.373" stop-color="#25d000"/><stop offset="0.380" stop-color="#31d200"/><stop offset="0.386" stop-color="#b5ef00"/><stop offset="0.392" stop-color="#d2f500"/><stop offset="0.398" stop-color="#41d600"/><stop offset="0.404" stop-color="#00bb0c"/><stop offset="0.410" stop-color="#0028be"/><stop offset="0.417" stop-color="#00008d"/><stop offset="0.423" stop-color="#00002b"/><stop offset="0.429" stop-color="#000009"/><stop offset="0.997" stop-color="#00000e"/></linearGradient><linearGradient id="h36" x1="0" y1="0" x2="0" y2="1"><stop offset="0.003" stop-color="#000002"/><stop offset="0.227" stop-color="#000021"/><stop offset="0.312" stop-color="#00000d"/><stop offset="0.318" stop-color="#00001a"/><stop offset="0.324" stop-color="#000048"/><stop offset="0.330" stop-color="#0000ca"/><stop offset="0.336" stop-color="#006166"/><stop offset="0.342" stop-color="#49d700"/><stop offset="0.348" stop-color="#95e800"/><stop offset="0.355" stop-color="#68de00"/><stop offset="0.361" stop-color="#22cf00"/><stop offset="0.367" stop-color="#31d200"/><stop offset="0.373" stop-color="#b4ef00"/><stop offset="0.379" stop-color="#d1f500"/><stop offset="0.385" stop-color="#41d600"/><stop offset="0.391" stop-color="#00ba0d"/><stop offset="0.397" stop-color="#0028be"/><stop offset="0.403" stop-color="#00008c"/><stop offset="0.409" stop-color="#00002b"/><stop offset="0.415" stop-color="#000009"/><stop offset="0.997" stop-color="#00000f"/></linearGradient><linearGradient id="h37" x1="0" y1="0" x2="0" y2="1"><stop offset="0.003" stop-color="#000002"/><stop offset="0.222" stop-color="#000021"/><stop offset="0.305" stop-color="#00000d"/><stop offset="0.311" stop-color="#000019"/><stop offset="0.317" stop-color="#000048"/><stop offset="0.322" stop-color="#0000ca"/><stop offset="0.328" stop-color="#006166"/><stop offset="0.334" stop-color="#48d700"/><stop offset="0.340" stop-color="#94e800"/><stop offset="0.346" stop-color="#65dd00"/><stop offset="0.352" stop-color="#21cf00"/><stop offset="0.358" stop-color="#30d200"/><stop offset="0.364" stop-color="#b4ee00"/><stop offset="0.370" stop-color="#d0f400"/><stop offset="0.376" stop-color="#40d500"/><stop offset="0.382" stop-color="#00b90e"/><stop offset="0.388" stop-color="#0027be"/><stop offset="0.393" stop-color="#00008c"/><stop offset="0.399" stop-color="#00002b"/><stop offset="0.405" stop-color="#000009"/><stop offset="0.997" stop-color="#000010"/></linearGradient><linearGradient id="h38" x1="0" y1="0" x2="0" y2="1"><stop offset="0.003" stop-color="#000002"/><stop offset="0.219" stop-color="#000021"/><stop offset="0.301" stop-color="#00000d"/><stop offset="0.307" stop-color="#000019"/><stop offset="0.313" stop-color="#000048"/><stop offset="0.319" stop-color="#0000ca"/><stop offset="0.325" stop-color="#006067"/><stop offset="0.330" stop-color="#47d700"/><stop offset="0.336" stop-color="#94e700"/><stop offset="0.342" stop-color="#61dd00"/><stop offset="0.348" stop-color="#20cf00"/><stop offset="0.354" stop-color="#2fd200"/><stop offset="0.360" stop-color="#b3ee00"/><stop offset="0.365" stop-color="#cff400"/><stop offset="0.371" stop-color="#3fd500"/><stop offset="0.377" stop-color="#00b90e"/><stop offset="0.383" stop-color="#0027bf"/><stop offset="0.389" stop-color="#00008c"/><stop offset="0.395" stop-color="#00002b"/><stop offset="0.401" stop-color="#000009"/><stop offset="0.722" stop-color="#000011"/><stop offset="0.997" stop-color="#000011"/></linearGradient><linearGradient id="h39" x1="0" y1="0" x2="0" y2="1"><stop offset="0.003" stop-color="#000002"/><stop offset="0.216" stop-color="#000021"/><stop offset="0.296" stop-color="#00000d"/><stop offset="0.302" stop-color="#000019"/><stop offset="0.307" stop-color="#000048"/><stop offset="0.313" stop-color="#0000c9"/><stop offset="0.319" stop-color="#006067"/><stop offset="0.325" stop-color="#47d700"/><stop offset="0.330" stop-color="#93e700"/><stop offset="0.342" stop-color="#1fce00"/><stop offset="0.348" stop-color="#2ed200"/><stop offset="0.353" stop-color="#b2ee00"/><stop offset="0.359" stop-color="#cef400"/><stop offset="0.365" stop-color="#3ed500"/><stop offset="0.371" stop-color="#00b80f"/><stop offset="0.376" stop-color="#0027bf"/><stop offset="0.382" stop-color="#00008c"/><stop offset="0.388" stop-color="#00002b"/><stop offset="0.394" stop-color="#000009"/><stop offset="0.578" stop-color="#000012"/><stop offset="0.997" stop-color="#000012"/></linearGradient><linearGradient id="h40" x1="0" y1="0" x2="0" y2="1"><stop offset="0.003" stop-color="#000002"/><stop offset="0.207" stop-color="#000021"/><stop offset="0.287" stop-color="#00000d"/><stop offset="0.293" stop-color="#000019"/><stop offset="0.298" stop-color="#000048"/><stop offset="0.304" stop-color="#0000c9"/><stop offset="0.310" stop-color="#005f68"/><stop offset="0.315" stop-color="#46d700"/><stop offset="0.321" stop-color="#92e700"/><stop offset="0.332" stop-color="#1fce00"/><stop offset="0.338" stop-color="#2dd100"/><stop offset="0.344" stop-color="#b1ee00"/><stop offset="0.349" stop-color="#cef400"/><stop offset="0.355" stop-color="#3dd500"/><stop offset="0.361" stop-color="#00b710"/><stop offset="0.366" stop-color="#0026c0"/><stop offset="0.372" stop-color="#00008c"/><stop offset="0.378" stop-color="#00002b"/><stop offset="0.384" stop-color="#000009"/><stop offset="0.537" stop-color="#000013"/><stop offset="0.997" stop-color="#000013"/></linearGradient><linearGradient id="h41" x1="0" y1="0" x2="0" y2="1"><stop offset="0.003" stop-color="#000002"/><stop offset="0.204" stop-color="#000021"/><stop offset="0.282" stop-color="#00000d"/><stop offset="0.288" stop-color="#000019"/><stop offset="0.293" stop-color="#000048"/><stop offset="0.299" stop-color="#0000c9"/><stop offset="0.304" stop-color="#005f68"/><stop offset="0.310" stop-color="#45d600"/><stop offset="0.316" stop-color="#91e700"/><stop offset="0.327" stop-color="#1ece00"/><stop offset="0.332" stop-color="#2dd100"/><stop offset="0.338" stop-color="#b0ee00"/><stop offset="0.344" stop-color="#cdf400"/><stop offset="0.349" stop-color="#3dd500"/><stop offset="0.355" stop-color="#00b710"/><stop offset="0.360" stop-color="#0026c0"/><stop offset="0.366" stop-color="#00008b"/><stop offset="0.372" stop-color="#00002b"/><stop offset="0.377" stop-color="#00000a"/><stop offset="0.511" stop-color="#000014"/><stop offset="0.997" stop-color="#000014"/></linearGradient><linearGradient id="h42" x1="0" y1="0" x2="0" y2="1"><stop offset="0.003" stop-color="#000002"/><stop offset="0.201" stop-color="#000021"/><stop offset="0.277" stop-color="#00000d"/><stop offset="0.283" stop-color="#000019"/><stop offset="0.288" stop-color="#000048"/><stop offset="0.294" stop-color="#0000c9"/><stop offset="0.299" stop-color="#005e69"/><stop offset="0.305" stop-color="#44d600"/><stop offset="0.310" stop-color="#90e700"/><stop offset="0.321" stop-color="#1dce00"/><stop offset="0.327" stop-color="#2cd100"/><stop offset="0.332" stop-color="#b0ed00"/><stop offset="0.338" stop-color="#ccf400"/><stop offset="0.343" stop-color="#3cd500"/><stop offset="0.349" stop-color="#00b611"/><stop offset="0.354" stop-color="#0026c1"/><stop offset="0.360" stop-color="#00008b"/><stop offset="0.365" stop-color="#00002b"/><stop offset="0.371" stop-color="#00000a"/><stop offset="0.492" stop-color="#000015"/><stop offset="0.997" stop-color="#000015"/></linearGradient><linearGradient id="h43" x1="0" y1="0" x2="0" y2="1"><stop offset="0.003" stop-color="#000002"/><stop offset="0.198" stop-color="#000021"/><stop offset="0.274" stop-color="#00000d"/><stop offset="0.280" stop-color="#000019"/><stop offset="0.285" stop-color="#000048"/><stop offset="0.291" stop-color="#0000c8"/><stop offset="0.296" stop-color="#005e69"/><stop offset="0.302" stop-color="#43d600"/><stop offset="0.307" stop-color="#90e700"/><stop offset="0.318" stop-color="#1cce00"/><stop offset="0.323" stop-color="#2bd100"/><stop offset="0.329" stop-color="#afed00"/><stop offset="0.334" stop-color="#cbf300"/><stop offset="0.340" stop-color="#3bd400"/><stop offset="0.345" stop-color="#00b512"/><stop offset="0.351" stop-color="#0026c1"/><stop offset="0.356" stop-color="#00008b"/><stop offset="0.361" stop-color="#00002b"/><stop offset="0.367" stop-color="#00000b"/><stop offset="0.476" stop-color="#000017"/><stop offset="0.997" stop-color="#000017"/></linearGradient><linearGradient id="h44" x1="0" y1="0" x2="0" y2="1"><stop offset="0.003" stop-color="#000002"/><stop offset="0.191" stop-color="#000021"/><stop offset="0.266" stop-color="#00000d"/><stop offset="0.272" stop-color="#000018"/><stop offset="0.277" stop-color="#000048"/><stop offset="0.282" stop-color="#0000c8"/><stop offset="0.288" stop-color="#005d6a"/><stop offset="0.293" stop-color="#43d600"/><stop offset="0.298" stop-color="#8fe600"/><stop offset="0.309" stop-color="#1bce00"/><stop offset="0.315" stop-color="#2ad100"/><stop offset="0.320" stop-color="#aeed00"/><stop offset="0.325" stop-color="#caf300"/><stop offset="0.331" stop-color="#3ad400"/><stop offset="0.336" stop-color="#00b512"/><stop offset="0.341" stop-color="#0025c2"/><stop offset="0.347" stop-color="#00008b"/><stop offset="0.352" stop-color="#00002b"/><stop offset="0.358" stop-color="#00000c"/><stop offset="0.460" stop-color="#000018"/><stop offset="0.997" stop-color="#000018"/></linearGradient><linearGradient id="h45" x1="0" y1="0" x2="0" y2="1"><stop offset="0.003" stop-color="#000002"/><stop offset="0.188" stop-color="#000021"/><stop offset="0.262" stop-color="#00000d"/><stop offset="0.267" stop-color="#000018"/><stop offset="0.272" stop-color="#000048"/><stop offset="0.278" stop-color="#0000c8"/><stop offset="0.283" stop-color="#005d6a"/><stop offset="0.288" stop-color="#42d600"/><stop offset="0.294" stop-color="#8ee600"/><stop offset="0.304" stop-color="#1bcd00"/><stop offset="0.310" stop-color="#29d100"/><stop offset="0.315" stop-color="#aded00"/><stop offset="0.320" stop-color="#caf300"/><stop offset="0.325" stop-color="#3ad400"/><stop offset="0.331" stop-color="#00b413"/><stop offset="0.336" stop-color="#0025c2"/><stop offset="0.341" stop-color="#00008b"/><stop offset="0.347" stop-color="#00002b"/><stop offset="0.352" stop-color="#00000c"/><stop offset="0.442" stop-color="#000019"/><stop offset="0.997" stop-color="#000019"/></linearGradient><linearGradient id="h46" x1="0" y1="0" x2="0" y2="1"><stop offset="0.003" stop-color="#000002"/><stop offset="0.185" stop-color="#000021"/><stop offset="0.258" stop-color="#00000d"/><stop offset="0.263" stop-color="#000018"/><stop offset="0.268" stop-color="#000048"/><stop offset="0.273" stop-color="#0000c8"/><stop offset="0.279" stop-color="#005c6b"/><stop offset="0.284" stop-color="#41d600"/><stop offset="0.289" stop-color="#8de600"/><stop offset="0.299" stop-color="#1acd00"/><stop offset="0.305" stop-color="#29d000"/><stop offset="0.310" stop-color="#aced00"/><stop offset="0.315" stop-color="#c9f300"/><stop offset="0.320" stop-color="#39d400"/><stop offset="0.326" stop-color="#00b413"/><stop offset="0.331" stop-color="#0025c3"/><stop offset="0.336" stop-color="#00008b"/><stop offset="0.341" stop-color="#00002b"/><stop offset="0.346" stop-color="#00000d"/><stop offset="0.435" stop-color="#00001a"/><stop offset="0.997" stop-color="#00001a"/></linearGradient><linearGradient id="h47" x1="0" y1="0" x2="0" y2="1"><stop offset="0.003" stop-color="#000002"/><stop offset="0.182" stop-color="#000021"/><stop offset="0.254" stop-color="#00000d"/><stop offset="0.259" stop-color="#000018"/><stop offset="0.264" stop-color="#000047"/><stop offset="0.269" stop-color="#0000c7"/><stop offset="0.274" stop-color="#005c6b"/><stop offset="0.279" stop-color="#40d500"/><stop offset="0.285" stop-color="#8de600"/><stop offset="0.295" stop-color="#19cd00"/><stop offset="0.300" stop-color="#28d000"/><stop offset="0.305" stop-color="#aced00"/><stop offset="0.310" stop-color="#c8f300"/><stop offset="0.315" stop-color="#38d400"/><stop offset="0.321" stop-color="#00b314"/><stop offset="0.326" stop-color="#0024c3"/><stop offset="0.331" stop-color="#00008a"/><stop offset="0.336" stop-color="#00002b"/><stop offset="0.341" stop-color="#00000d"/><stop offset="0.423" stop-color="#00001b"/><stop offset="0.997" stop-color="#00001b"/></linearGradient></defs><rect width="967" height="541" fill="#f0f0f0"/>
<rect x="11.5" y="4.5" width="133" height="110" rx="2.5" fill="none" stroke="#d5dde3"/>
<rect x="12.5" y="5.5" width="131" height="108" rx="2" fill="none" stroke="#ffffff"/>
<rect x="17" y="2" width="28" height="5" fill="#f0f0f0" />
<text transform="translate(19.00,9.30) scale(0.827,1)" font-size="12" fill="#000" text-anchor="start" font-weight="normal" >Area</text>
<text transform="translate(31.50,25.00) scale(0.8,1)" font-size="12" fill="#000" text-anchor="start" font-weight="normal" >Min</text>
<text transform="translate(86.50,25.00) scale(0.833,1)" font-size="12" fill="#000" text-anchor="start" font-weight="normal" >Max</text>
<text transform="translate(16.00,43.50) scale(0.87,1)" font-size="12" fill="#000" text-anchor="start" font-weight="normal" >x:</text>
<text transform="translate(16.00,70.50) scale(0.87,1)" font-size="12" fill="#000" text-anchor="start" font-weight="normal" >y:</text>
<rect x="30.5" y="30.5" width="48" height="19" fill="#f0f0f0" stroke="#a9a9a9" stroke-width="1" />
<text transform="translate(54.50,44.30) scale(0.85,1)" font-size="12" fill="#6d6d6d" text-anchor="middle" font-weight="normal" >0.5</text>
<rect x="85.5" y="30.5" width="49" height="19" fill="#f0f0f0" stroke="#a9a9a9" stroke-width="1" />
<text transform="translate(110.00,44.30) scale(0.906,1)" font-size="12" fill="#6d6d6d" text-anchor="middle" font-weight="normal" >47.5</text>
<rect x="30.5" y="57.5" width="48" height="19" fill="#f0f0f0" stroke="#a9a9a9" stroke-width="1" />
<text transform="translate(54.50,71.30) scale(0.876,1)" font-size="12" fill="#6d6d6d" text-anchor="middle" font-weight="normal" >-0.109</text>
<rect x="86.5" y="57.5" width="48" height="19" fill="#f0f0f0" stroke="#a9a9a9" stroke-width="1" />
<text transform="translate(110.50,71.30) scale(0.88,1)" font-size="12" fill="#6d6d6d" text-anchor="middle" font-weight="normal" >0.191</text>
<rect x="16.5" y="84.5" width="12" height="12" fill="#ffffff" stroke="#555555" stroke-width="1" />
<path d="M18.5,90.5 L21,93.5 L26,87" fill="none" stroke="#111" stroke-width="2.1"/>
<text transform="translate(35.50,94.70) scale(0.805,1)" font-size="12" fill="#000" text-anchor="start" font-weight="normal" >Full size</text>
<rect x="15" y="100" width="75" height="17" fill="#f0f0f0" />
<rect x="16.5" y="102.5" width="12" height="12" fill="#ffffff" stroke="#555555" stroke-width="1" />
<text transform="translate(35.50,112.70) scale(0.848,1)" font-size="12" fill="#000" text-anchor="start" font-weight="normal" >Show grid</text>
<rect x="11.5" y="122.5" width="133" height="177" rx="2.5" fill="none" stroke="#d5dde3"/>
<rect x="12.5" y="123.5" width="131" height="175" rx="2" fill="none" stroke="#ffffff"/>
<rect x="17" y="120" width="32" height="5" fill="#f0f0f0" />
<text transform="translate(19.00,126.70) scale(0.856,1)" font-size="12" fill="#000" text-anchor="start" font-weight="normal" >colors</text>
<rect x="21.5" y="135.5" width="105" height="19" fill="#f0f0f0" stroke="#a9a9a9" stroke-width="1" />
<text transform="translate(74.00,149.30) scale(0.904,1)" font-size="12" fill="#6d6d6d" text-anchor="middle" font-weight="normal" >9851297</text>
<rect x="48" y="159" width="43" height="70" fill="url(#grad)"/>
<rect x="21.5" y="234.5" width="105" height="19" fill="#f0f0f0" stroke="#a9a9a9" stroke-width="1" />
<text transform="translate(74.00,248.30) scale(0.873,1)" font-size="12" fill="#6d6d6d" text-anchor="middle" font-weight="normal" >-2.321E-8</text>
<rect x="21.5" y="260.5" width="12" height="12" fill="#ffffff" stroke="#555555" stroke-width="1" />
<path d="M23.5,266.5 L26,269.5 L31,263" fill="none" stroke="#111" stroke-width="2.1"/>
<text transform="translate(39.50,270.60) scale(0.883,1)" font-size="12" fill="#000" text-anchor="start" font-weight="normal" >auto scale</text>
<text transform="translate(22.50,293.70) scale(0.839,1)" font-size="12" fill="#000" text-anchor="start" font-weight="normal" >style:</text>
<rect x="56.5" y="277.5" width="70" height="20" fill="#ffffff" stroke="#4a4a4a" stroke-width="1" />
<rect x="59" y="280" width="43.5" height="13" fill="#3399ff" />
<text transform="translate(59.50,290.70) scale(0.87,1)" font-size="12" fill="#fff" text-anchor="start" font-weight="normal" >All colors</text>
<path d="M114.8,286 L118.3,289.8 L121.8,286" fill="none" stroke="#333" stroke-width="1.6"/>
<rect x="10" y="303" width="135" height="3" fill="#e2e2e2" />
<rect x="10.5" y="308.5" width="134" height="24" fill="#ffffff" stroke="#7c8591" stroke-width="1" />
<path d="M16.5,315 L16.5,312.5 L28,312.5 L28,315" fill="none" stroke="#555" stroke-width="1"/>
<rect x="12.5" y="314.5" width="130" height="16" fill="#ffffff" stroke="#c2c2c2" stroke-width="1" />
<rect x="29.5" y="314.5" width="67" height="16" fill="#dadada" stroke="#a6a6a6" stroke-width="1" />
<line x1="28.5" y1="314" x2="28.5" y2="331" stroke="#c2c2c2" stroke-width="1" />
<line x1="126.5" y1="314" x2="126.5" y2="331" stroke="#c2c2c2" stroke-width="1" />
<path d="M22.5,318.8 L19,322.3 L22.5,325.8" fill="none" stroke="#555" stroke-width="1.4"/>
<path d="M132.5,318.8 L136,322.3 L132.5,325.8" fill="none" stroke="#555" stroke-width="1.4"/>
<rect x="59.3" y="319" width="1.6" height="7" fill="#555" />
<rect x="62.3" y="319" width="1.6" height="7" fill="#555" />
<rect x="65.3" y="319" width="1.6" height="7" fill="#555" />
<rect x="16.5" y="340.5" width="12" height="12" fill="#ffffff" stroke="#555555" stroke-width="1" />
<path d="M18.5,346.5 L21,349.5 L26,343" fill="none" stroke="#111" stroke-width="2.1"/>
<text transform="translate(35.00,350.50) scale(0.885,1)" font-size="12" fill="#000" text-anchor="start" font-weight="normal" >Show overlay</text>
<rect x="11.5" y="365.5" width="61" height="18" fill="#f4f4f4" stroke="#bcbcbc" stroke-width="1" />
<text transform="translate(41.80,379.20) scale(0.858,1)" font-size="12" fill="#a3a3a3" text-anchor="middle" font-weight="normal" >Select all</text>
<rect x="75.75" y="365.75" width="67.5" height="17" fill="#e0e0e0" stroke="#6c6c6c" stroke-width="1.5"/>
<text transform="translate(109.00,379.20) scale(0.857,1)" font-size="12" fill="#000" text-anchor="middle" font-weight="normal" >None</text>
<rect x="507.5" y="4.5" width="133" height="110" rx="2.5" fill="none" stroke="#d5dde3"/>
<rect x="508.5" y="5.5" width="131" height="108" rx="2" fill="none" stroke="#ffffff"/>
<rect x="513" y="2" width="28" height="5" fill="#f0f0f0" />
<text transform="translate(515.00,9.30) scale(0.827,1)" font-size="12" fill="#000" text-anchor="start" font-weight="normal" >Area</text>
<text transform="translate(527.50,25.00) scale(0.8,1)" font-size="12" fill="#000" text-anchor="start" font-weight="normal" >Min</text>
<text transform="translate(582.50,25.00) scale(0.833,1)" font-size="12" fill="#000" text-anchor="start" font-weight="normal" >Max</text>
<text transform="translate(512.00,43.50) scale(0.87,1)" font-size="12" fill="#000" text-anchor="start" font-weight="normal" >x:</text>
<text transform="translate(512.00,70.50) scale(0.87,1)" font-size="12" fill="#000" text-anchor="start" font-weight="normal" >y:</text>
<rect x="526.5" y="30.5" width="48" height="19" fill="#f0f0f0" stroke="#a9a9a9" stroke-width="1" />
<text transform="translate(550.50,44.30) scale(0.85,1)" font-size="12" fill="#6d6d6d" text-anchor="middle" font-weight="normal" >0.5</text>
<rect x="581.5" y="30.5" width="49" height="19" fill="#f0f0f0" stroke="#a9a9a9" stroke-width="1" />
<text transform="translate(606.00,44.30) scale(0.906,1)" font-size="12" fill="#6d6d6d" text-anchor="middle" font-weight="normal" >47.5</text>
<rect x="526.5" y="57.5" width="48" height="19" fill="#f0f0f0" stroke="#a9a9a9" stroke-width="1" />
<text transform="translate(550.50,71.30) scale(0.882,1)" font-size="12" fill="#6d6d6d" text-anchor="middle" font-weight="normal" >-0.144</text>
<rect x="582.5" y="57.5" width="48" height="19" fill="#f0f0f0" stroke="#a9a9a9" stroke-width="1" />
<text transform="translate(606.50,71.30) scale(0.887,1)" font-size="12" fill="#6d6d6d" text-anchor="middle" font-weight="normal" >0.156</text>
<rect x="512.5" y="84.5" width="12" height="12" fill="#ffffff" stroke="#555555" stroke-width="1" />
<path d="M514.5,90.5 L517,93.5 L522,87" fill="none" stroke="#111" stroke-width="2.1"/>
<text transform="translate(531.50,94.70) scale(0.805,1)" font-size="12" fill="#000" text-anchor="start" font-weight="normal" >Full size</text>
<rect x="511" y="100" width="75" height="17" fill="#f0f0f0" />
<rect x="512.5" y="102.5" width="12" height="12" fill="#ffffff" stroke="#555555" stroke-width="1" />
<text transform="translate(531.50,112.70) scale(0.848,1)" font-size="12" fill="#000" text-anchor="start" font-weight="normal" >Show grid</text>
<rect x="507.5" y="122.5" width="133" height="177" rx="2.5" fill="none" stroke="#d5dde3"/>
<rect x="508.5" y="123.5" width="131" height="175" rx="2" fill="none" stroke="#ffffff"/>
<rect x="513" y="120" width="32" height="5" fill="#f0f0f0" />
<text transform="translate(515.00,126.70) scale(0.856,1)" font-size="12" fill="#000" text-anchor="start" font-weight="normal" >colors</text>
<rect x="517.5" y="135.5" width="105" height="19" fill="#f0f0f0" stroke="#a9a9a9" stroke-width="1" />
<text transform="translate(570.00,149.30) scale(0.901,1)" font-size="12" fill="#6d6d6d" text-anchor="middle" font-weight="normal" >5325489</text>
<rect x="544" y="159" width="43" height="70" fill="url(#grad)"/>
<rect x="517.5" y="234.5" width="105" height="19" fill="#f0f0f0" stroke="#a9a9a9" stroke-width="1" />
<text transform="translate(570.00,248.30) scale(0.889,1)" font-size="12" fill="#6d6d6d" text-anchor="middle" font-weight="normal" >-49.01819</text>
<rect x="517.5" y="260.5" width="12" height="12" fill="#ffffff" stroke="#555555" stroke-width="1" />
<path d="M519.5,266.5 L522,269.5 L527,263" fill="none" stroke="#111" stroke-width="2.1"/>
<text transform="translate(535.50,270.60) scale(0.883,1)" font-size="12" fill="#000" text-anchor="start" font-weight="normal" >auto scale</text>
<text transform="translate(518.50,293.70) scale(0.839,1)" font-size="12" fill="#000" text-anchor="start" font-weight="normal" >style:</text>
<rect x="552.5" y="277.5" width="70" height="20" fill="#ffffff" stroke="#4a4a4a" stroke-width="1" />
<text transform="translate(555.50,290.70) scale(0.87,1)" font-size="12" fill="#000" text-anchor="start" font-weight="normal" >All colors</text>
<path d="M610.8,286 L614.3,289.8 L617.8,286" fill="none" stroke="#333" stroke-width="1.6"/>
<rect x="506" y="303" width="135" height="3" fill="#e2e2e2" />
<rect x="506.5" y="308.5" width="134" height="24" fill="#ffffff" stroke="#7c8591" stroke-width="1" />
<path d="M512.5,315 L512.5,312.5 L524,312.5 L524,315" fill="none" stroke="#555" stroke-width="1"/>
<rect x="508.5" y="314.5" width="130" height="16" fill="#ffffff" stroke="#c2c2c2" stroke-width="1" />
<rect x="525.5" y="314.5" width="67" height="16" fill="#dadada" stroke="#a6a6a6" stroke-width="1" />
<line x1="524.5" y1="314" x2="524.5" y2="331" stroke="#c2c2c2" stroke-width="1" />
<line x1="622.5" y1="314" x2="622.5" y2="331" stroke="#c2c2c2" stroke-width="1" />
<path d="M518.5,318.8 L515,322.3 L518.5,325.8" fill="none" stroke="#555" stroke-width="1.4"/>
<path d="M628.5,318.8 L632,322.3 L628.5,325.8" fill="none" stroke="#555" stroke-width="1.4"/>
<rect x="555.3" y="319" width="1.6" height="7" fill="#555" />
<rect x="558.3" y="319" width="1.6" height="7" fill="#555" />
<rect x="561.3" y="319" width="1.6" height="7" fill="#555" />
<rect x="512.5" y="340.5" width="12" height="12" fill="#ffffff" stroke="#555555" stroke-width="1" />
<path d="M514.5,346.5 L517,349.5 L522,343" fill="none" stroke="#111" stroke-width="2.1"/>
<text transform="translate(531.00,350.50) scale(0.885,1)" font-size="12" fill="#000" text-anchor="start" font-weight="normal" >Show overlay</text>
<rect x="507.5" y="365.5" width="61" height="18" fill="#f4f4f4" stroke="#bcbcbc" stroke-width="1" />
<text transform="translate(537.80,379.20) scale(0.858,1)" font-size="12" fill="#a3a3a3" text-anchor="middle" font-weight="normal" >Select all</text>
<rect x="571.75" y="365.75" width="67.5" height="17" fill="#e0e0e0" stroke="#6c6c6c" stroke-width="1.5"/>
<text transform="translate(605.00,379.20) scale(0.857,1)" font-size="12" fill="#000" text-anchor="middle" font-weight="normal" >None</text>
<rect x="192" y="20" width="276" height="330" fill="#ffffff" />
<rect x="193" y="21" width="274" height="328" fill="#000000" />
<rect x="193" y="200" width="274" height="40" fill="url(#lband)"/><rect x="193" y="228.6" width="5" height="1.2" fill="#000"/>
<polyline points="193.5,239.0 246.0,261.8 286.3,275.5 292.5,106.1 309.5,112.4 315.5,284.3 344.6,296.2 350.7,129.3 367.5,138.2 373.4,311.4 418.0,330.8 465.0,347.5" fill="none" stroke="#ffffff" stroke-width="1" shape-rendering="crispEdges"/>
<text transform="translate(330.50,12.90) scale(0.92,1)" font-size="12.3" fill="#000" text-anchor="middle" font-weight="bold" >Current Density (A/eV/cm^2)</text>
<text transform="translate(188.50,123.80) scale(0.9,1)" font-size="12" fill="#000" text-anchor="end" font-weight="normal" >0.1</text>
<text transform="translate(190.50,232.80) scale(0.9,1)" font-size="12" fill="#000" text-anchor="end" font-weight="normal" >0</text>
<text transform="translate(188.50,342.50) scale(0.9,1)" font-size="12" fill="#000" text-anchor="end" font-weight="normal" >-0.1</text>
<text transform="translate(247.70,362.50) scale(0.9,1)" font-size="12" fill="#000" text-anchor="middle" font-weight="normal" >10</text>
<text transform="translate(305.60,362.50) scale(0.9,1)" font-size="12" fill="#000" text-anchor="middle" font-weight="normal" >20</text>
<text transform="translate(363.50,362.50) scale(0.9,1)" font-size="12" fill="#000" text-anchor="middle" font-weight="normal" >30</text>
<text transform="translate(421.40,362.50) scale(0.9,1)" font-size="12" fill="#000" text-anchor="middle" font-weight="normal" >40</text>
<text transform="translate(154.5,185.5) rotate(-90)" font-size="12" text-anchor="middle" fill="#000">(y</text>
<line x1="146" y1="177.5" x2="157.5" y2="177.5" stroke="#000" stroke-width="1.2" />
<text transform="translate(330.50,378.50) scale(0.87,1)" font-size="12" fill="#000" text-anchor="middle" font-weight="normal" >(x)</text>
<rect x="688" y="20" width="260" height="330" fill="#ffffff" />
<rect x="689" y="21" width="258" height="328" fill="#000000" />
<rect x="689" y="142" width="5" height="62" fill="url(#h0)"/><rect x="694" y="142" width="6" height="62" fill="url(#h1)"/><rect x="700" y="142" width="5" height="62" fill="url(#h2)"/><rect x="705" y="142" width="6" height="62" fill="url(#h3)"/><rect x="711" y="142" width="5" height="75" fill="url(#h4)"/><rect x="716" y="142" width="5" height="76" fill="url(#h5)"/><rect x="721" y="142" width="6" height="76" fill="url(#h6)"/><rect x="727" y="142" width="5" height="76" fill="url(#h7)"/><rect x="732" y="142" width="6" height="76" fill="url(#h8)"/><rect x="738" y="142" width="5" height="77" fill="url(#h9)"/><rect x="743" y="142" width="5" height="78" fill="url(#h10)"/><rect x="748" y="143" width="6" height="77" fill="url(#h11)"/><rect x="754" y="143" width="5" height="77" fill="url(#h12)"/><rect x="759" y="143" width="6" height="77" fill="url(#h13)"/><rect x="765" y="143" width="5" height="77" fill="url(#h14)"/><rect x="770" y="144" width="5" height="76" fill="url(#h15)"/><rect x="775" y="145" width="6" height="75" fill="url(#h16)"/><rect x="781" y="145" width="5" height="75" fill="url(#h17)"/><rect x="786" y="146" width="6" height="74" fill="url(#h18)"/><rect x="792" y="146" width="5" height="74" fill="url(#h19)"/><rect x="797" y="147" width="5" height="73" fill="url(#h20)"/><rect x="802" y="147" width="6" height="73" fill="url(#h21)"/><rect x="808" y="147" width="5" height="73" fill="url(#h22)"/><rect x="813" y="148" width="6" height="72" fill="url(#h23)"/><rect x="819" y="148" width="5" height="72" fill="url(#h24)"/><rect x="824" y="148" width="5" height="72" fill="url(#h25)"/><rect x="829" y="149" width="6" height="71" fill="url(#h26)"/><rect x="835" y="149" width="5" height="71" fill="url(#h27)"/><rect x="840" y="149" width="6" height="71" fill="url(#h28)"/><rect x="846" y="149" width="5" height="71" fill="url(#h29)"/><rect x="851" y="150" width="5" height="70" fill="url(#h30)"/><rect x="856" y="150" width="6" height="70" fill="url(#h31)"/><rect x="862" y="150" width="5" height="151" fill="url(#h32)"/><rect x="867" y="150" width="6" height="155" fill="url(#h33)"/><rect x="873" y="150" width="5" height="158" fill="url(#h34)"/><rect x="878" y="150" width="5" height="162" fill="url(#h35)"/><rect x="883" y="151" width="6" height="165" fill="url(#h36)"/><rect x="889" y="151" width="5" height="169" fill="url(#h37)"/><rect x="894" y="151" width="6" height="171" fill="url(#h38)"/><rect x="900" y="151" width="5" height="174" fill="url(#h39)"/><rect x="905" y="152" width="5" height="176" fill="url(#h40)"/><rect x="910" y="152" width="6" height="179" fill="url(#h41)"/><rect x="916" y="152" width="5" height="182" fill="url(#h42)"/><rect x="921" y="152" width="6" height="184" fill="url(#h43)"/><rect x="927" y="153" width="5" height="186" fill="url(#h44)"/><rect x="932" y="153" width="5" height="189" fill="url(#h45)"/><rect x="937" y="153" width="6" height="192" fill="url(#h46)"/><rect x="943" y="153" width="4" height="195" fill="url(#h47)"/><rect x="689" y="189.4" width="5" height="1.2" fill="#000"/>
<polyline points="690.0,197.2 776.3,240.7 782.3,75.8 798.9,84.3 804.0,259.0 814.3,263.3 831.3,276.3 837.7,110.1 853.6,122.0 859.7,298.1 873.9,307.2 887.5,317.5 945.0,347.6" fill="none" stroke="#ffffff" stroke-width="1" shape-rendering="crispEdges"/>
<text transform="translate(818.50,12.90) scale(0.92,1)" font-size="12.3" fill="#000" text-anchor="middle" font-weight="bold" >Current Density (A/eV/cm^2)</text>
<text transform="translate(685.00,85.50) scale(0.9,1)" font-size="12" fill="#000" text-anchor="end" font-weight="normal" >0.1</text>
<text transform="translate(686.50,194.00) scale(0.9,1)" font-size="12" fill="#000" text-anchor="end" font-weight="normal" >0</text>
<text transform="translate(685.00,303.50) scale(0.9,1)" font-size="12" fill="#000" text-anchor="end" font-weight="normal" >-0.1</text>
<text transform="translate(740.70,362.50) scale(0.9,1)" font-size="12" fill="#000" text-anchor="middle" font-weight="normal" >10</text>
<text transform="translate(796.00,362.50) scale(0.9,1)" font-size="12" fill="#000" text-anchor="middle" font-weight="normal" >20</text>
<text transform="translate(850.20,362.50) scale(0.9,1)" font-size="12" fill="#000" text-anchor="middle" font-weight="normal" >30</text>
<text transform="translate(904.70,362.50) scale(0.9,1)" font-size="12" fill="#000" text-anchor="middle" font-weight="normal" >40</text>
<text transform="translate(652.5,184.4) rotate(-90)" font-size="12" text-anchor="middle" fill="#000">(y</text>
<line x1="642" y1="176.5" x2="653.5" y2="176.5" stroke="#000" stroke-width="1.2" />
<text transform="translate(818.00,377.50) scale(0.87,1)" font-size="12" fill="#000" text-anchor="middle" font-weight="normal" >(x)</text>
<rect x="10" y="386" width="466" height="3" fill="#e3e3e3" />
<text transform="translate(16.00,407.60) scale(0.841,1)" font-size="12" fill="#000" text-anchor="start" font-weight="normal" >Simulations in</text>
<rect x="88.5" y="394.5" width="160" height="20" fill="#ffffff" stroke="#6a6a6a" stroke-width="1" />
<clipPath id="cc0"><rect x="91" y="396" width="137.8" height="16"/></clipPath>
<rect x="91" y="397.4" width="137.8" height="14" fill="#3399ff" />
<g clip-path="url(#cc0)">
<text transform="translate(89.00,408.50) scale(0.87,1)" font-size="12" fill="#fff" text-anchor="start" font-weight="normal" >ıo.MSB - Output - 2016-08-09</text>
</g>
<path d="M236.5,403.5 L240,407.3 L243.5,403.5" fill="none" stroke="#333" stroke-width="1.6"/>
<g transform="translate(259,398.5)"><path d="M0.8,11.5 L0.8,2 Q0.8,0.8 2,0.8 L5.5,0.8 L7,2.3 L12.5,2.3 Q13.3,2.3 13.3,3.3 L13.3,5" fill="#f7df95" stroke="#8a7440" stroke-width="1"/><path d="M0.8,11.8 L3.5,5 L15.5,5 L12.8,11.8 Z" fill="#f0c450" stroke="#7e6a38" stroke-width="1"/><path d="M4,6 L14.3,6" stroke="#fff2b0" stroke-width="1"/><rect x="8" y="12.3" width="2.2" height="2.2" fill="#0000c0"/><rect x="11" y="12.3" width="2.2" height="2.2" fill="#0000c0"/><rect x="14" y="12.3" width="2.2" height="2.2" fill="#0000c0"/></g>
<g transform="translate(288,397)"><path d="M1,8 L8,1.2 L15,8" fill="none" stroke="#9a9a9a" stroke-width="1.8" stroke-linejoin="round"/><rect x="10.8" y="1.8" width="2" height="4" fill="#a8a8a8"/><path d="M3,7.5 L8,3 L13,7.5 L13,14.5 L3,14.5 Z" fill="#c2c2c2" stroke="#a5a5a5" stroke-width="0.8"/><rect x="6.6" y="9.5" width="2.8" height="5" fill="#8c8c8c"/></g>
<text transform="translate(320.10,407.80) scale(0.87,1)" font-size="12" fill="#000" text-anchor="start" font-weight="normal" >Ou</text>
<rect x="329.3" y="396" width="13" height="16" fill="#f0f0f0" />
<circle cx="336.1" cy="403.9" r="5.6" fill="#fff" stroke="#5a5a5a" stroke-width="1.1"/>
<circle cx="336.1" cy="403.9" r="2.8" fill="#1c1c1c"/>
<text transform="translate(349.10,408.80) scale(0.87,1)" font-size="12" fill="#000" text-anchor="start" font-weight="normal" >List view</text>
<text transform="translate(396.10,408.80) scale(0.87,1)" font-size="12" fill="#000" text-anchor="start" font-weight="normal" >m</text>
<rect x="402.6" y="396" width="13" height="16" fill="#f0f0f0" />
<circle cx="409.3" cy="403.9" r="5.6" fill="#fff" stroke="#5a5a5a" stroke-width="1.1"/>
<text transform="translate(422.60,409.00) scale(0.886,1)" font-size="12" fill="#000" text-anchor="start" font-weight="normal" >Tree view</text>
<line x1="475.6" y1="400" x2="475.6" y2="409" stroke="#d8c8f0" stroke-width="1" />
<rect x="10.5" y="419.5" width="299" height="141" fill="#ffffff" stroke="#828790" stroke-width="1" />
<g transform="translate(15,422)"><path d="M0.8,2.2 Q0.8,0.8 2.2,0.8 L5.5,0.8 L7,2.5 L12.2,2.5 Q13,2.5 13,3.5 L13,5 L0.8,5 Z" fill="#fde9a6" stroke="#cf9a2a" stroke-width="1"/><rect x="0.8" y="4" width="14.4" height="8.8" rx="1" fill="#fff3b0" stroke="#d09b22" stroke-width="1.3"/><rect x="5" y="5" width="7" height="7" fill="url(#blob)"/><path d="M1.5,13.2 L15,13.2" stroke="#7a5a10" stroke-width="0.8" stroke-opacity="0.5"/></g>
<text transform="translate(36.30,433.40) scale(0.881,1)" font-size="12" fill="#000" text-anchor="start" font-weight="normal" >RTD_PhDthesis_PeterGreck</text>
<rect x="34" y="437" width="180" height="16" fill="#e5e5e5" />
<g transform="translate(15,438)"><path d="M0.8,2.2 Q0.8,0.8 2.2,0.8 L5.5,0.8 L7,2.5 L12.2,2.5 Q13,2.5 13,3.5 L13,5 L0.8,5 Z" fill="#fde9a6" stroke="#cf9a2a" stroke-width="1"/><rect x="0.8" y="4" width="14.4" height="8.8" rx="1" fill="#fff3b0" stroke="#d09b22" stroke-width="1.3"/><rect x="5" y="5" width="7" height="7" fill="url(#blob)"/><path d="M1.5,13.2 L15,13.2" stroke="#7a5a10" stroke-width="0.8" stroke-opacity="0.5"/></g>
<text transform="translate(36.30,449.40) scale(0.882,1)" font-size="12" fill="#000" text-anchor="start" font-weight="normal" >RTD_PhDthesis_PeterGreck_ballistic</text>
<g transform="translate(15,454)"><path d="M0.8,2.2 Q0.8,0.8 2.2,0.8 L5.5,0.8 L7,2.5 L12.2,2.5 Q13,2.5 13,3.5 L13,5 L0.8,5 Z" fill="#fde9a6" stroke="#cf9a2a" stroke-width="1"/><rect x="0.8" y="4" width="14.4" height="8.8" rx="1" fill="#fff3b0" stroke="#d09b22" stroke-width="1.3"/><rect x="5" y="5" width="7" height="7" fill="url(#blob)"/><path d="M1.5,13.2 L15,13.2" stroke="#7a5a10" stroke-width="0.8" stroke-opacity="0.5"/></g>
<text transform="translate(36.30,465.40) scale(0.872,1)" font-size="12" fill="#000" text-anchor="start" font-weight="normal" >THz_QCL_Adams_APL2010</text>
<g transform="translate(15,470)"><path d="M0.8,2.2 Q0.8,0.8 2.2,0.8 L5.5,0.8 L7,2.5 L12.2,2.5 Q13,2.5 13,3.5 L13,5 L0.8,5 Z" fill="#fde9a6" stroke="#cf9a2a" stroke-width="1"/><rect x="0.8" y="4" width="14.4" height="8.8" rx="1" fill="#fff3b0" stroke="#d09b22" stroke-width="1.3"/><rect x="5" y="5" width="7" height="7" fill="url(#blob)"/><path d="M1.5,13.2 L15,13.2" stroke="#7a5a10" stroke-width="0.8" stroke-opacity="0.5"/></g>
<text transform="translate(36.30,481.40) scale(0.878,1)" font-size="12" fill="#000" text-anchor="start" font-weight="normal" >THz_QCL_Benz_APL2007</text>
<g transform="translate(15,486)"><path d="M0.8,2.2 Q0.8,0.8 2.2,0.8 L5.5,0.8 L7,2.5 L12.2,2.5 Q13,2.5 13,3.5 L13,5 L0.8,5 Z" fill="#fde9a6" stroke="#cf9a2a" stroke-width="1"/><rect x="0.8" y="4" width="14.4" height="8.8" rx="1" fill="#fff3b0" stroke="#d09b22" stroke-width="1.3"/><rect x="5" y="5" width="7" height="7" fill="url(#blob)"/><path d="M1.5,13.2 L15,13.2" stroke="#7a5a10" stroke-width="0.8" stroke-opacity="0.5"/></g>
<text transform="translate(36.30,497.40) scale(0.87,1)" font-size="12" fill="#000" text-anchor="start" font-weight="normal" >THz_QCL_Fathololoumi_OpticsExpress2012</text>
<g transform="translate(15,502)"><path d="M0.8,2.2 Q0.8,0.8 2.2,0.8 L5.5,0.8 L7,2.5 L12.2,2.5 Q13,2.5 13,3.5 L13,5 L0.8,5 Z" fill="#fde9a6" stroke="#cf9a2a" stroke-width="1"/><rect x="0.8" y="4" width="14.4" height="8.8" rx="1" fill="#fff3b0" stroke="#d09b22" stroke-width="1.3"/><rect x="5" y="5" width="7" height="7" fill="url(#blob)"/><path d="M1.5,13.2 L15,13.2" stroke="#7a5a10" stroke-width="0.8" stroke-opacity="0.5"/></g>
<text transform="translate(36.30,513.40) scale(0.875,1)" font-size="12" fill="#000" text-anchor="start" font-weight="normal" >THz_QCL_Jukam_APL2009</text>
<g transform="translate(15,518)"><path d="M0.8,2.2 Q0.8,0.8 2.2,0.8 L5.5,0.8 L7,2.5 L12.2,2.5 Q13,2.5 13,3.5 L13,5 L0.8,5 Z" fill="#fde9a6" stroke="#cf9a2a" stroke-width="1"/><rect x="0.8" y="4" width="14.4" height="8.8" rx="1" fill="#fff3b0" stroke="#d09b22" stroke-width="1.3"/><rect x="5" y="5" width="7" height="7" fill="url(#blob)"/><path d="M1.5,13.2 L15,13.2" stroke="#7a5a10" stroke-width="0.8" stroke-opacity="0.5"/></g>
<text transform="translate(36.30,529.40) scale(0.869,1)" font-size="12" fill="#000" text-anchor="start" font-weight="normal" >THz_QCL_Kumar_APL2006</text>
<g transform="translate(15,534)"><path d="M0.8,2.2 Q0.8,0.8 2.2,0.8 L5.5,0.8 L7,2.5 L12.2,2.5 Q13,2.5 13,3.5 L13,5 L0.8,5 Z" fill="#fde9a6" stroke="#cf9a2a" stroke-width="1"/><rect x="0.8" y="4" width="14.4" height="8.8" rx="1" fill="#fff3b0" stroke="#d09b22" stroke-width="1.3"/><rect x="5" y="5" width="7" height="7" fill="url(#blob)"/><path d="M1.5,13.2 L15,13.2" stroke="#7a5a10" stroke-width="0.8" stroke-opacity="0.5"/></g>
<text transform="translate(36.30,545.40) scale(0.878,1)" font-size="12" fill="#000" text-anchor="start" font-weight="normal" >THz_QCL_Luo_APL2007</text>
<rect x="291.5" y="421.5" width="16" height="125" fill="#ffffff" stroke="#c2c2c2" stroke-width="1" />
<line x1="291" y1="437.5" x2="308" y2="437.5" stroke="#c2c2c2" stroke-width="1" />
<path d="M295.8,431.8 L299.5,428.2 L303.2,431.8" fill="none" stroke="#555" stroke-width="1.4"/>
<rect x="291.5" y="500.5" width="16" height="60" fill="#dadada" stroke="#a6a6a6" stroke-width="1" />
<rect x="295.5" y="523.4" width="8" height="1.5" fill="#555" />
<rect x="295.5" y="526.1999999999999" width="8" height="1.5" fill="#555" />
<rect x="295.5" y="529.0" width="8" height="1.5" fill="#555" />
<rect x="313.5" y="419.5" width="162" height="141" fill="#ffffff" stroke="#828790" stroke-width="1" />
<clipPath id="tc0"><rect x="314" y="420" width="143" height="130"/></clipPath>
<g clip-path="url(#tc0)">
<line x1="326.5" y1="420" x2="326.5" y2="541" stroke="#707070" stroke-width="1" stroke-dasharray="1,1"/>
<line x1="345.5" y1="420" x2="345.5" y2="541" stroke="#707070" stroke-width="1" stroke-dasharray="1,1"/>
<rect x="341.5" y="425.5" width="8" height="8" fill="#e2e2e2" stroke="#a0a0a0" stroke-width="1" />
<line x1="343" y1="429.5" x2="348" y2="429.5" stroke="#333" stroke-width="1.3" />
<line x1="350" y1="429.5" x2="355" y2="429.5" stroke="#707070" stroke-width="1" stroke-dasharray="1,1"/>
<g transform="translate(356,422)"><path d="M1.5,3 Q1.5,1.5 3,1.5 L6.5,1.5 L8,3.2 L13,3.2 Q14.5,3.2 14.5,4.5 L14.5,6 L1.5,6 Z" fill="#fbe59a" stroke="#d49c2c" stroke-width="1"/><path d="M1,5.5 L15,5.5 L15,13 Q15,14 14,14 L2,14 Q1,14 1,13 Z" fill="#fde57e" stroke="#d1952a" stroke-width="1.1"/><rect x="2.2" y="6.6" width="11.6" height="4" fill="#fff3a8"/><path d="M2,14.6 L15.5,14.6 L15.5,6.5" fill="none" stroke="#6a4a10" stroke-opacity="0.45" stroke-width="0.9"/></g>
<text transform="translate(377.00,433.20) scale(0.842,1)" font-size="12" fill="#000" text-anchor="start" font-weight="normal" >CarrierDensity</text>
<line x1="364.5" y1="435" x2="364.5" y2="478" stroke="#707070" stroke-width="1" stroke-dasharray="1,1"/>
<line x1="365" y1="445.5" x2="375" y2="445.5" stroke="#707070" stroke-width="1" stroke-dasharray="1,1"/>
<g transform="translate(375,438)"><rect x="0" y="0" width="16" height="15" fill="#000"/><rect x="1.5" y="1.5" width="13" height="12" fill="#ffffff"/><rect x="3" y="3" width="10" height="9" fill="#dcf6dc"/><rect x="3" y="1.5" width="1" height="1.2" fill="#000"/><rect x="3" y="12.3" width="1" height="1.2" fill="#000"/><rect x="6" y="1.5" width="1" height="1.2" fill="#000"/><rect x="6" y="12.3" width="1" height="1.2" fill="#000"/><rect x="9" y="1.5" width="1" height="1.2" fill="#000"/><rect x="9" y="12.3" width="1" height="1.2" fill="#000"/><rect x="12" y="1.5" width="1" height="1.2" fill="#000"/><rect x="12" y="12.3" width="1" height="1.2" fill="#000"/><rect x="1.5" y="3.5" width="1.2" height="1" fill="#000"/><rect x="13.3" y="3.5" width="1.2" height="1" fill="#000"/><rect x="1.5" y="6.5" width="1.2" height="1" fill="#000"/><rect x="13.3" y="6.5" width="1.2" height="1" fill="#000"/><rect x="1.5" y="9.5" width="1.2" height="1" fill="#000"/><rect x="13.3" y="9.5" width="1.2" height="1" fill="#000"/><path d="M1.5,9.5 L5,9.5 Q6,9.5 6.8,6.2 Q7.8,3.3 8.6,3.3 Q9.5,3.3 10.2,6.2 Q11,9.5 12,9.5 L14.5,9.5" fill="none" stroke="#ff0000" stroke-width="1.1"/><path d="M1.5,6.5 L5.2,6.5 Q6.6,6.5 7.6,8.5 Q8.8,11.2 10.2,11.2 L14,11.2" fill="none" stroke="#0000ff" stroke-width="1.1"/></g>
<text transform="translate(396.00,449.20) scale(0.842,1)" font-size="12" fill="#000" text-anchor="start" font-weight="normal" >CarrierDensity</text>
<line x1="365" y1="461.5" x2="375" y2="461.5" stroke="#707070" stroke-width="1" stroke-dasharray="1,1"/>
<g transform="translate(375,454)"><rect x="0" y="0" width="16" height="15" fill="#000"/><rect x="2.8" y="2.2" width="10.4" height="10.8" fill="url(#blob2)"/></g>
<text transform="translate(396.00,465.20) scale(0.842,1)" font-size="12" fill="#000" text-anchor="start" font-weight="normal" >CarrierDensity</text>
<line x1="365" y1="477.5" x2="375" y2="477.5" stroke="#707070" stroke-width="1" stroke-dasharray="1,1"/>
<g transform="translate(375,470)"><rect x="0" y="0" width="16" height="15" fill="#000"/><rect x="1.5" y="1.5" width="13" height="12" fill="#ffffff"/><rect x="3" y="3" width="10" height="9" fill="#dcf6dc"/><rect x="3" y="1.5" width="1" height="1.2" fill="#000"/><rect x="3" y="12.3" width="1" height="1.2" fill="#000"/><rect x="6" y="1.5" width="1" height="1.2" fill="#000"/><rect x="6" y="12.3" width="1" height="1.2" fill="#000"/><rect x="9" y="1.5" width="1" height="1.2" fill="#000"/><rect x="9" y="12.3" width="1" height="1.2" fill="#000"/><rect x="12" y="1.5" width="1" height="1.2" fill="#000"/><rect x="12" y="12.3" width="1" height="1.2" fill="#000"/><rect x="1.5" y="3.5" width="1.2" height="1" fill="#000"/><rect x="13.3" y="3.5" width="1.2" height="1" fill="#000"/><rect x="1.5" y="6.5" width="1.2" height="1" fill="#000"/><rect x="13.3" y="6.5" width="1.2" height="1" fill="#000"/><rect x="1.5" y="9.5" width="1.2" height="1" fill="#000"/><rect x="13.3" y="9.5" width="1.2" height="1" fill="#000"/><path d="M1.5,9.5 L5,9.5 Q6,9.5 6.8,6.2 Q7.8,3.3 8.6,3.3 Q9.5,3.3 10.2,6.2 Q11,9.5 12,9.5 L14.5,9.5" fill="none" stroke="#ff0000" stroke-width="1.1"/><path d="M1.5,6.5 L5.2,6.5 Q6.6,6.5 7.6,8.5 Q8.8,11.2 10.2,11.2 L14,11.2" fill="none" stroke="#0000ff" stroke-width="1.1"/></g>
<text transform="translate(396.00,481.20) scale(0.842,1)" font-size="12" fill="#000" text-anchor="start" font-weight="normal" >CarrierDensity</text>
<rect x="341.5" y="489.5" width="8" height="8" fill="#e2e2e2" stroke="#a0a0a0" stroke-width="1" />
<line x1="343" y1="493.5" x2="348" y2="493.5" stroke="#333" stroke-width="1.3" />
<line x1="350" y1="493.5" x2="355" y2="493.5" stroke="#707070" stroke-width="1" stroke-dasharray="1,1"/>
<g transform="translate(356,486)"><path d="M1.5,3 Q1.5,1.5 3,1.5 L6.5,1.5 L8,3.2 L13,3.2 Q14.5,3.2 14.5,4.5 L14.5,6 L1.5,6 Z" fill="#fbe59a" stroke="#d49c2c" stroke-width="1"/><path d="M1,5.5 L15,5.5 L15,13 Q15,14 14,14 L2,14 Q1,14 1,13 Z" fill="#fde57e" stroke="#d1952a" stroke-width="1.1"/><rect x="2.2" y="6.6" width="11.6" height="4" fill="#fff3a8"/><path d="M2,14.6 L15.5,14.6 L15.5,6.5" fill="none" stroke="#6a4a10" stroke-opacity="0.45" stroke-width="0.9"/></g>
<text transform="translate(377.00,497.20) scale(0.842,1)" font-size="12" fill="#000" text-anchor="start" font-weight="normal" >CurrentDensity</text>
<line x1="364.5" y1="499" x2="364.5" y2="541" stroke="#707070" stroke-width="1" stroke-dasharray="1,1"/>
<line x1="365" y1="509.5" x2="375" y2="509.5" stroke="#707070" stroke-width="1" stroke-dasharray="1,1"/>
<g transform="translate(375,502)"><rect x="0" y="0" width="16" height="15" fill="#000"/><rect x="1.5" y="1.5" width="13" height="12" fill="#ffffff"/><rect x="3" y="3" width="10" height="9" fill="#dcf6dc"/><rect x="3" y="1.5" width="1" height="1.2" fill="#000"/><rect x="3" y="12.3" width="1" height="1.2" fill="#000"/><rect x="6" y="1.5" width="1" height="1.2" fill="#000"/><rect x="6" y="12.3" width="1" height="1.2" fill="#000"/><rect x="9" y="1.5" width="1" height="1.2" fill="#000"/><rect x="9" y="12.3" width="1" height="1.2" fill="#000"/><rect x="12" y="1.5" width="1" height="1.2" fill="#000"/><rect x="12" y="12.3" width="1" height="1.2" fill="#000"/><rect x="1.5" y="3.5" width="1.2" height="1" fill="#000"/><rect x="13.3" y="3.5" width="1.2" height="1" fill="#000"/><rect x="1.5" y="6.5" width="1.2" height="1" fill="#000"/><rect x="13.3" y="6.5" width="1.2" height="1" fill="#000"/><rect x="1.5" y="9.5" width="1.2" height="1" fill="#000"/><rect x="13.3" y="9.5" width="1.2" height="1" fill="#000"/><path d="M1.5,9.5 L5,9.5 Q6,9.5 6.8,6.2 Q7.8,3.3 8.6,3.3 Q9.5,3.3 10.2,6.2 Q11,9.5 12,9.5 L14.5,9.5" fill="none" stroke="#ff0000" stroke-width="1.1"/><path d="M1.5,6.5 L5.2,6.5 Q6.6,6.5 7.6,8.5 Q8.8,11.2 10.2,11.2 L14,11.2" fill="none" stroke="#0000ff" stroke-width="1.1"/></g>
<text transform="translate(396.00,513.20) scale(0.842,1)" font-size="12" fill="#000" text-anchor="start" font-weight="normal" >CurrentDensity</text>
<line x1="365" y1="525.5" x2="375" y2="525.5" stroke="#707070" stroke-width="1" stroke-dasharray="1,1"/>
<rect x="394" y="517" width="80" height="16" fill="#e5e5e5" />
<g transform="translate(375,518)"><rect x="0" y="0" width="16" height="15" fill="#000"/><rect x="2.8" y="2.2" width="10.4" height="10.8" fill="url(#blob2)"/></g>
<text transform="translate(396.00,529.20) scale(0.842,1)" font-size="12" fill="#000" text-anchor="start" font-weight="normal" >CurrentDensity</text>
<line x1="365" y1="541.5" x2="375" y2="541.5" stroke="#707070" stroke-width="1" stroke-dasharray="1,1"/>
<g transform="translate(375,534)"><rect x="0" y="0" width="16" height="15" fill="#000"/><rect x="1.5" y="1.5" width="13" height="12" fill="#ffffff"/><rect x="3" y="3" width="10" height="9" fill="#dcf6dc"/><rect x="3" y="1.5" width="1" height="1.2" fill="#000"/><rect x="3" y="12.3" width="1" height="1.2" fill="#000"/><rect x="6" y="1.5" width="1" height="1.2" fill="#000"/><rect x="6" y="12.3" width="1" height="1.2" fill="#000"/><rect x="9" y="1.5" width="1" height="1.2" fill="#000"/><rect x="9" y="12.3" width="1" height="1.2" fill="#000"/><rect x="12" y="1.5" width="1" height="1.2" fill="#000"/><rect x="12" y="12.3" width="1" height="1.2" fill="#000"/><rect x="1.5" y="3.5" width="1.2" height="1" fill="#000"/><rect x="13.3" y="3.5" width="1.2" height="1" fill="#000"/><rect x="1.5" y="6.5" width="1.2" height="1" fill="#000"/><rect x="13.3" y="6.5" width="1.2" height="1" fill="#000"/><rect x="1.5" y="9.5" width="1.2" height="1" fill="#000"/><rect x="13.3" y="9.5" width="1.2" height="1" fill="#000"/><path d="M1.5,9.5 L5,9.5 Q6,9.5 6.8,6.2 Q7.8,3.3 8.6,3.3 Q9.5,3.3 10.2,6.2 Q11,9.5 12,9.5 L14.5,9.5" fill="none" stroke="#ff0000" stroke-width="1.1"/><path d="M1.5,6.5 L5.2,6.5 Q6.6,6.5 7.6,8.5 Q8.8,11.2 10.2,11.2 L14,11.2" fill="none" stroke="#0000ff" stroke-width="1.1"/></g>
<text transform="translate(396.00,545.20) scale(0.842,1)" font-size="12" fill="#000" text-anchor="start" font-weight="normal" >CurrentDensity</text>
</g>
<rect x="457.5" y="421.5" width="16" height="125" fill="#ffffff" stroke="#c2c2c2" stroke-width="1" />
<line x1="457" y1="437.5" x2="474" y2="437.5" stroke="#c2c2c2" stroke-width="1" />
<path d="M461.8,431.8 L465.5,428.2 L469.2,431.8" fill="none" stroke="#555" stroke-width="1.4"/>
<rect x="457.5" y="485.5" width="16" height="18" fill="#dadada" stroke="#a6a6a6" stroke-width="1" />
<rect x="461.5" y="490.4" width="8" height="1.5" fill="#555" />
<rect x="461.5" y="493.2" width="8" height="1.5" fill="#555" />
<rect x="461.5" y="496.0" width="8" height="1.5" fill="#555" />
<rect x="506" y="386" width="449" height="3" fill="#e3e3e3" />
<text transform="translate(512.00,407.60) scale(0.841,1)" font-size="12" fill="#000" text-anchor="start" font-weight="normal" >Simulations in</text>
<rect x="584.5" y="394.5" width="150" height="20" fill="#ffffff" stroke="#6a6a6a" stroke-width="1" />
<clipPath id="cc496"><rect x="587" y="396" width="128" height="16"/></clipPath>
<rect x="587" y="397.4" width="128" height="14" fill="#3399ff" />
<g clip-path="url(#cc496)">
<text transform="translate(588.00,408.50) scale(0.87,1)" font-size="12" fill="#fff" text-anchor="start" font-weight="normal" >MSB - Output - 2016-08-09</text>
</g>
<path d="M722.5,403.5 L726,407.3 L729.5,403.5" fill="none" stroke="#333" stroke-width="1.6"/>
<g transform="translate(745,398.5)"><path d="M0.8,11.5 L0.8,2 Q0.8,0.8 2,0.8 L5.5,0.8 L7,2.3 L12.5,2.3 Q13.3,2.3 13.3,3.3 L13.3,5" fill="#f7df95" stroke="#8a7440" stroke-width="1"/><path d="M0.8,11.8 L3.5,5 L15.5,5 L12.8,11.8 Z" fill="#f0c450" stroke="#7e6a38" stroke-width="1"/><path d="M4,6 L14.3,6" stroke="#fff2b0" stroke-width="1"/><rect x="8" y="12.3" width="2.2" height="2.2" fill="#0000c0"/><rect x="11" y="12.3" width="2.2" height="2.2" fill="#0000c0"/><rect x="14" y="12.3" width="2.2" height="2.2" fill="#0000c0"/></g>
<g transform="translate(774,397)"><path d="M1,8 L8,1.2 L15,8" fill="none" stroke="#9a9a9a" stroke-width="1.8" stroke-linejoin="round"/><rect x="10.8" y="1.8" width="2" height="4" fill="#a8a8a8"/><path d="M3,7.5 L8,3 L13,7.5 L13,14.5 L3,14.5 Z" fill="#c2c2c2" stroke="#a5a5a5" stroke-width="0.8"/><rect x="6.6" y="9.5" width="2.8" height="5" fill="#8c8c8c"/></g>
<text transform="translate(804.00,407.80) scale(0.87,1)" font-size="12" fill="#000" text-anchor="start" font-weight="normal" >C</text>
<rect x="809.2" y="396" width="13" height="16" fill="#f0f0f0" />
<circle cx="816" cy="403.9" r="5.6" fill="#fff" stroke="#5a5a5a" stroke-width="1.1"/>
<circle cx="816" cy="403.9" r="2.8" fill="#1c1c1c"/>
<text transform="translate(829.00,408.80) scale(0.87,1)" font-size="12" fill="#000" text-anchor="start" font-weight="normal" >List view</text>
<text transform="translate(876.00,408.80) scale(0.87,1)" font-size="12" fill="#000" text-anchor="start" font-weight="normal" >ir</text>
<rect x="882.5" y="396" width="13" height="16" fill="#f0f0f0" />
<circle cx="889.2" cy="403.9" r="5.6" fill="#fff" stroke="#5a5a5a" stroke-width="1.1"/>
<text transform="translate(902.50,409.00) scale(0.886,1)" font-size="12" fill="#000" text-anchor="start" font-weight="normal" >Tree view</text>
<line x1="955.5" y1="400" x2="955.5" y2="409" stroke="#d8c8f0" stroke-width="1" />
<rect x="506.5" y="419.5" width="289" height="141" fill="#ffffff" stroke="#828790" stroke-width="1" />
<rect x="530" y="421" width="140" height="16" fill="#e5e5e5" />
<g transform="translate(511,422)"><path d="M0.8,2.2 Q0.8,0.8 2.2,0.8 L5.5,0.8 L7,2.5 L12.2,2.5 Q13,2.5 13,3.5 L13,5 L0.8,5 Z" fill="#fde9a6" stroke="#cf9a2a" stroke-width="1"/><rect x="0.8" y="4" width="14.4" height="8.8" rx="1" fill="#fff3b0" stroke="#d09b22" stroke-width="1.3"/><rect x="5" y="5" width="7" height="7" fill="url(#blob)"/><path d="M1.5,13.2 L15,13.2" stroke="#7a5a10" stroke-width="0.8" stroke-opacity="0.5"/></g>
<text transform="translate(532.30,433.40) scale(0.881,1)" font-size="12" fill="#000" text-anchor="start" font-weight="normal" >RTD_PhDthesis_PeterGreck</text>
<g transform="translate(511,438)"><path d="M0.8,2.2 Q0.8,0.8 2.2,0.8 L5.5,0.8 L7,2.5 L12.2,2.5 Q13,2.5 13,3.5 L13,5 L0.8,5 Z" fill="#fde9a6" stroke="#cf9a2a" stroke-width="1"/><rect x="0.8" y="4" width="14.4" height="8.8" rx="1" fill="#fff3b0" stroke="#d09b22" stroke-width="1.3"/><rect x="5" y="5" width="7" height="7" fill="url(#blob)"/><path d="M1.5,13.2 L15,13.2" stroke="#7a5a10" stroke-width="0.8" stroke-opacity="0.5"/></g>
<text transform="translate(532.30,449.40) scale(0.882,1)" font-size="12" fill="#000" text-anchor="start" font-weight="normal" >RTD_PhDthesis_PeterGreck_ballistic</text>
<g transform="translate(511,454)"><path d="M0.8,2.2 Q0.8,0.8 2.2,0.8 L5.5,0.8 L7,2.5 L12.2,2.5 Q13,2.5 13,3.5 L13,5 L0.8,5 Z" fill="#fde9a6" stroke="#cf9a2a" stroke-width="1"/><rect x="0.8" y="4" width="14.4" height="8.8" rx="1" fill="#fff3b0" stroke="#d09b22" stroke-width="1.3"/><rect x="5" y="5" width="7" height="7" fill="url(#blob)"/><path d="M1.5,13.2 L15,13.2" stroke="#7a5a10" stroke-width="0.8" stroke-opacity="0.5"/></g>
<text transform="translate(532.30,465.40) scale(0.872,1)" font-size="12" fill="#000" text-anchor="start" font-weight="normal" >THz_QCL_Adams_APL2010</text>
<g transform="translate(511,470)"><path d="M0.8,2.2 Q0.8,0.8 2.2,0.8 L5.5,0.8 L7,2.5 L12.2,2.5 Q13,2.5 13,3.5 L13,5 L0.8,5 Z" fill="#fde9a6" stroke="#cf9a2a" stroke-width="1"/><rect x="0.8" y="4" width="14.4" height="8.8" rx="1" fill="#fff3b0" stroke="#d09b22" stroke-width="1.3"/><rect x="5" y="5" width="7" height="7" fill="url(#blob)"/><path d="M1.5,13.2 L15,13.2" stroke="#7a5a10" stroke-width="0.8" stroke-opacity="0.5"/></g>
<text transform="translate(532.30,481.40) scale(0.878,1)" font-size="12" fill="#000" text-anchor="start" font-weight="normal" >THz_QCL_Benz_APL2007</text>
<g transform="translate(511,486)"><path d="M0.8,2.2 Q0.8,0.8 2.2,0.8 L5.5,0.8 L7,2.5 L12.2,2.5 Q13,2.5 13,3.5 L13,5 L0.8,5 Z" fill="#fde9a6" stroke="#cf9a2a" stroke-width="1"/><rect x="0.8" y="4" width="14.4" height="8.8" rx="1" fill="#fff3b0" stroke="#d09b22" stroke-width="1.3"/><rect x="5" y="5" width="7" height="7" fill="url(#blob)"/><path d="M1.5,13.2 L15,13.2" stroke="#7a5a10" stroke-width="0.8" stroke-opacity="0.5"/></g>
<text transform="translate(532.30,497.40) scale(0.87,1)" font-size="12" fill="#000" text-anchor="start" font-weight="normal" >THz_QCL_Fathololoumi_OpticsExpress2012</text>
<g transform="translate(511,502)"><path d="M0.8,2.2 Q0.8,0.8 2.2,0.8 L5.5,0.8 L7,2.5 L12.2,2.5 Q13,2.5 13,3.5 L13,5 L0.8,5 Z" fill="#fde9a6" stroke="#cf9a2a" stroke-width="1"/><rect x="0.8" y="4" width="14.4" height="8.8" rx="1" fill="#fff3b0" stroke="#d09b22" stroke-width="1.3"/><rect x="5" y="5" width="7" height="7" fill="url(#blob)"/><path d="M1.5,13.2 L15,13.2" stroke="#7a5a10" stroke-width="0.8" stroke-opacity="0.5"/></g>
<text transform="translate(532.30,513.40) scale(0.875,1)" font-size="12" fill="#000" text-anchor="start" font-weight="normal" >THz_QCL_Jukam_APL2009</text>
<g transform="translate(511,518)"><path d="M0.8,2.2 Q0.8,0.8 2.2,0.8 L5.5,0.8 L7,2.5 L12.2,2.5 Q13,2.5 13,3.5 L13,5 L0.8,5 Z" fill="#fde9a6" stroke="#cf9a2a" stroke-width="1"/><rect x="0.8" y="4" width="14.4" height="8.8" rx="1" fill="#fff3b0" stroke="#d09b22" stroke-width="1.3"/><rect x="5" y="5" width="7" height="7" fill="url(#blob)"/><path d="M1.5,13.2 L15,13.2" stroke="#7a5a10" stroke-width="0.8" stroke-opacity="0.5"/></g>
<text transform="translate(532.30,529.40) scale(0.869,1)" font-size="12" fill="#000" text-anchor="start" font-weight="normal" >THz_QCL_Kumar_APL2006</text>
<g transform="translate(511,534)"><path d="M0.8,2.2 Q0.8,0.8 2.2,0.8 L5.5,0.8 L7,2.5 L12.2,2.5 Q13,2.5 13,3.5 L13,5 L0.8,5 Z" fill="#fde9a6" stroke="#cf9a2a" stroke-width="1"/><rect x="0.8" y="4" width="14.4" height="8.8" rx="1" fill="#fff3b0" stroke="#d09b22" stroke-width="1.3"/><rect x="5" y="5" width="7" height="7" fill="url(#blob)"/><path d="M1.5,13.2 L15,13.2" stroke="#7a5a10" stroke-width="0.8" stroke-opacity="0.5"/></g>
<text transform="translate(532.30,545.40) scale(0.878,1)" font-size="12" fill="#000" text-anchor="start" font-weight="normal" >THz_QCL_Luo_APL2007</text>
<rect x="777.5" y="421.5" width="16" height="125" fill="#ffffff" stroke="#c2c2c2" stroke-width="1" />
<line x1="777" y1="437.5" x2="794" y2="437.5" stroke="#c2c2c2" stroke-width="1" />
<path d="M781.8,431.8 L785.5,428.2 L789.2,431.8" fill="none" stroke="#555" stroke-width="1.4"/>
<rect x="777.5" y="500.5" width="16" height="60" fill="#dadada" stroke="#a6a6a6" stroke-width="1" />
<rect x="781.5" y="523.4" width="8" height="1.5" fill="#555" />
<rect x="781.5" y="526.1999999999999" width="8" height="1.5" fill="#555" />
<rect x="781.5" y="529.0" width="8" height="1.5" fill="#555" />
<rect x="799.5" y="419.5" width="156" height="141" fill="#ffffff" stroke="#828790" stroke-width="1" />
<clipPath id="tc496"><rect x="800" y="420" width="137" height="130"/></clipPath>
<g clip-path="url(#tc496)">
<line x1="812.5" y1="420" x2="812.5" y2="541" stroke="#707070" stroke-width="1" stroke-dasharray="1,1"/>
<line x1="831.5" y1="420" x2="831.5" y2="541" stroke="#707070" stroke-width="1" stroke-dasharray="1,1"/>
<rect x="827.5" y="425.5" width="8" height="8" fill="#e2e2e2" stroke="#a0a0a0" stroke-width="1" />
<line x1="829" y1="429.5" x2="834" y2="429.5" stroke="#333" stroke-width="1.3" />
<line x1="836" y1="429.5" x2="841" y2="429.5" stroke="#707070" stroke-width="1" stroke-dasharray="1,1"/>
<g transform="translate(842,422)"><path d="M1.5,3 Q1.5,1.5 3,1.5 L6.5,1.5 L8,3.2 L13,3.2 Q14.5,3.2 14.5,4.5 L14.5,6 L1.5,6 Z" fill="#fbe59a" stroke="#d49c2c" stroke-width="1"/><path d="M1,5.5 L15,5.5 L15,13 Q15,14 14,14 L2,14 Q1,14 1,13 Z" fill="#fde57e" stroke="#d1952a" stroke-width="1.1"/><rect x="2.2" y="6.6" width="11.6" height="4" fill="#fff3a8"/><path d="M2,14.6 L15.5,14.6 L15.5,6.5" fill="none" stroke="#6a4a10" stroke-opacity="0.45" stroke-width="0.9"/></g>
<text transform="translate(863.00,433.20) scale(0.842,1)" font-size="12" fill="#000" text-anchor="start" font-weight="normal" >CarrierDensity</text>
<line x1="850.5" y1="435" x2="850.5" y2="478" stroke="#707070" stroke-width="1" stroke-dasharray="1,1"/>
<line x1="851" y1="445.5" x2="861" y2="445.5" stroke="#707070" stroke-width="1" stroke-dasharray="1,1"/>
<g transform="translate(861,438)"><rect x="0" y="0" width="16" height="15" fill="#000"/><rect x="1.5" y="1.5" width="13" height="12" fill="#ffffff"/><rect x="3" y="3" width="10" height="9" fill="#dcf6dc"/><rect x="3" y="1.5" width="1" height="1.2" fill="#000"/><rect x="3" y="12.3" width="1" height="1.2" fill="#000"/><rect x="6" y="1.5" width="1" height="1.2" fill="#000"/><rect x="6" y="12.3" width="1" height="1.2" fill="#000"/><rect x="9" y="1.5" width="1" height="1.2" fill="#000"/><rect x="9" y="12.3" width="1" height="1.2" fill="#000"/><rect x="12" y="1.5" width="1" height="1.2" fill="#000"/><rect x="12" y="12.3" width="1" height="1.2" fill="#000"/><rect x="1.5" y="3.5" width="1.2" height="1" fill="#000"/><rect x="13.3" y="3.5" width="1.2" height="1" fill="#000"/><rect x="1.5" y="6.5" width="1.2" height="1" fill="#000"/><rect x="13.3" y="6.5" width="1.2" height="1" fill="#000"/><rect x="1.5" y="9.5" width="1.2" height="1" fill="#000"/><rect x="13.3" y="9.5" width="1.2" height="1" fill="#000"/><path d="M1.5,9.5 L5,9.5 Q6,9.5 6.8,6.2 Q7.8,3.3 8.6,3.3 Q9.5,3.3 10.2,6.2 Q11,9.5 12,9.5 L14.5,9.5" fill="none" stroke="#ff0000" stroke-width="1.1"/><path d="M1.5,6.5 L5.2,6.5 Q6.6,6.5 7.6,8.5 Q8.8,11.2 10.2,11.2 L14,11.2" fill="none" stroke="#0000ff" stroke-width="1.1"/></g>
<text transform="translate(882.00,449.20) scale(0.842,1)" font-size="12" fill="#000" text-anchor="start" font-weight="normal" >CarrierDensity</text>
<line x1="851" y1="461.5" x2="861" y2="461.5" stroke="#707070" stroke-width="1" stroke-dasharray="1,1"/>
<g transform="translate(861,454)"><rect x="0" y="0" width="16" height="15" fill="#000"/><rect x="2.8" y="2.2" width="10.4" height="10.8" fill="url(#blob2)"/></g>
<text transform="translate(882.00,465.20) scale(0.842,1)" font-size="12" fill="#000" text-anchor="start" font-weight="normal" >CarrierDensity</text>
<line x1="851" y1="477.5" x2="861" y2="477.5" stroke="#707070" stroke-width="1" stroke-dasharray="1,1"/>
<g transform="translate(861,470)"><rect x="0" y="0" width="16" height="15" fill="#000"/><rect x="1.5" y="1.5" width="13" height="12" fill="#ffffff"/><rect x="3" y="3" width="10" height="9" fill="#dcf6dc"/><rect x="3" y="1.5" width="1" height="1.2" fill="#000"/><rect x="3" y="12.3" width="1" height="1.2" fill="#000"/><rect x="6" y="1.5" width="1" height="1.2" fill="#000"/><rect x="6" y="12.3" width="1" height="1.2" fill="#000"/><rect x="9" y="1.5" width="1" height="1.2" fill="#000"/><rect x="9" y="12.3" width="1" height="1.2" fill="#000"/><rect x="12" y="1.5" width="1" height="1.2" fill="#000"/><rect x="12" y="12.3" width="1" height="1.2" fill="#000"/><rect x="1.5" y="3.5" width="1.2" height="1" fill="#000"/><rect x="13.3" y="3.5" width="1.2" height="1" fill="#000"/><rect x="1.5" y="6.5" width="1.2" height="1" fill="#000"/><rect x="13.3" y="6.5" width="1.2" height="1" fill="#000"/><rect x="1.5" y="9.5" width="1.2" height="1" fill="#000"/><rect x="13.3" y="9.5" width="1.2" height="1" fill="#000"/><path d="M1.5,9.5 L5,9.5 Q6,9.5 6.8,6.2 Q7.8,3.3 8.6,3.3 Q9.5,3.3 10.2,6.2 Q11,9.5 12,9.5 L14.5,9.5" fill="none" stroke="#ff0000" stroke-width="1.1"/><path d="M1.5,6.5 L5.2,6.5 Q6.6,6.5 7.6,8.5 Q8.8,11.2 10.2,11.2 L14,11.2" fill="none" stroke="#0000ff" stroke-width="1.1"/></g>
<text transform="translate(882.00,481.20) scale(0.842,1)" font-size="12" fill="#000" text-anchor="start" font-weight="normal" >CarrierDensity</text>
<rect x="827.5" y="489.5" width="8" height="8" fill="#e2e2e2" stroke="#a0a0a0" stroke-width="1" />
<line x1="829" y1="493.5" x2="834" y2="493.5" stroke="#333" stroke-width="1.3" />
<line x1="836" y1="493.5" x2="841" y2="493.5" stroke="#707070" stroke-width="1" stroke-dasharray="1,1"/>
<g transform="translate(842,486)"><path d="M1.5,3 Q1.5,1.5 3,1.5 L6.5,1.5 L8,3.2 L13,3.2 Q14.5,3.2 14.5,4.5 L14.5,6 L1.5,6 Z" fill="#fbe59a" stroke="#d49c2c" stroke-width="1"/><path d="M1,5.5 L15,5.5 L15,13 Q15,14 14,14 L2,14 Q1,14 1,13 Z" fill="#fde57e" stroke="#d1952a" stroke-width="1.1"/><rect x="2.2" y="6.6" width="11.6" height="4" fill="#fff3a8"/><path d="M2,14.6 L15.5,14.6 L15.5,6.5" fill="none" stroke="#6a4a10" stroke-opacity="0.45" stroke-width="0.9"/></g>
<text transform="translate(863.00,497.20) scale(0.842,1)" font-size="12" fill="#000" text-anchor="start" font-weight="normal" >CurrentDensity</text>
<line x1="850.5" y1="499" x2="850.5" y2="541" stroke="#707070" stroke-width="1" stroke-dasharray="1,1"/>
<line x1="851" y1="509.5" x2="861" y2="509.5" stroke="#707070" stroke-width="1" stroke-dasharray="1,1"/>
<g transform="translate(861,502)"><rect x="0" y="0" width="16" height="15" fill="#000"/><rect x="1.5" y="1.5" width="13" height="12" fill="#ffffff"/><rect x="3" y="3" width="10" height="9" fill="#dcf6dc"/><rect x="3" y="1.5" width="1" height="1.2" fill="#000"/><rect x="3" y="12.3" width="1" height="1.2" fill="#000"/><rect x="6" y="1.5" width="1" height="1.2" fill="#000"/><rect x="6" y="12.3" width="1" height="1.2" fill="#000"/><rect x="9" y="1.5" width="1" height="1.2" fill="#000"/><rect x="9" y="12.3" width="1" height="1.2" fill="#000"/><rect x="12" y="1.5" width="1" height="1.2" fill="#000"/><rect x="12" y="12.3" width="1" height="1.2" fill="#000"/><rect x="1.5" y="3.5" width="1.2" height="1" fill="#000"/><rect x="13.3" y="3.5" width="1.2" height="1" fill="#000"/><rect x="1.5" y="6.5" width="1.2" height="1" fill="#000"/><rect x="13.3" y="6.5" width="1.2" height="1" fill="#000"/><rect x="1.5" y="9.5" width="1.2" height="1" fill="#000"/><rect x="13.3" y="9.5" width="1.2" height="1" fill="#000"/><path d="M1.5,9.5 L5,9.5 Q6,9.5 6.8,6.2 Q7.8,3.3 8.6,3.3 Q9.5,3.3 10.2,6.2 Q11,9.5 12,9.5 L14.5,9.5" fill="none" stroke="#ff0000" stroke-width="1.1"/><path d="M1.5,6.5 L5.2,6.5 Q6.6,6.5 7.6,8.5 Q8.8,11.2 10.2,11.2 L14,11.2" fill="none" stroke="#0000ff" stroke-width="1.1"/></g>
<text transform="translate(882.00,513.20) scale(0.842,1)" font-size="12" fill="#000" text-anchor="start" font-weight="normal" >CurrentDensity</text>
<line x1="851" y1="525.5" x2="861" y2="525.5" stroke="#707070" stroke-width="1" stroke-dasharray="1,1"/>
<rect x="880" y="517" width="80" height="16" fill="#3399ff" />
<g transform="translate(861,518)"><rect x="0" y="0" width="16" height="15" fill="#000"/><rect x="2.8" y="2.2" width="10.4" height="10.8" fill="url(#blob2)"/></g>
<text transform="translate(882.00,529.20) scale(0.842,1)" font-size="12" fill="#fff" text-anchor="start" font-weight="normal" >CurrentDensity</text>
<line x1="851" y1="541.5" x2="861" y2="541.5" stroke="#707070" stroke-width="1" stroke-dasharray="1,1"/>
<g transform="translate(861,534)"><rect x="0" y="0" width="16" height="15" fill="#000"/><rect x="1.5" y="1.5" width="13" height="12" fill="#ffffff"/><rect x="3" y="3" width="10" height="9" fill="#dcf6dc"/><rect x="3" y="1.5" width="1" height="1.2" fill="#000"/><rect x="3" y="12.3" width="1" height="1.2" fill="#000"/><rect x="6" y="1.5" width="1" height="1.2" fill="#000"/><rect x="6" y="12.3" width="1" height="1.2" fill="#000"/><rect x="9" y="1.5" width="1" height="1.2" fill="#000"/><rect x="9" y="12.3" width="1" height="1.2" fill="#000"/><rect x="12" y="1.5" width="1" height="1.2" fill="#000"/><rect x="12" y="12.3" width="1" height="1.2" fill="#000"/><rect x="1.5" y="3.5" width="1.2" height="1" fill="#000"/><rect x="13.3" y="3.5" width="1.2" height="1" fill="#000"/><rect x="1.5" y="6.5" width="1.2" height="1" fill="#000"/><rect x="13.3" y="6.5" width="1.2" height="1" fill="#000"/><rect x="1.5" y="9.5" width="1.2" height="1" fill="#000"/><rect x="13.3" y="9.5" width="1.2" height="1" fill="#000"/><path d="M1.5,9.5 L5,9.5 Q6,9.5 6.8,6.2 Q7.8,3.3 8.6,3.3 Q9.5,3.3 10.2,6.2 Q11,9.5 12,9.5 L14.5,9.5" fill="none" stroke="#ff0000" stroke-width="1.1"/><path d="M1.5,6.5 L5.2,6.5 Q6.6,6.5 7.6,8.5 Q8.8,11.2 10.2,11.2 L14,11.2" fill="none" stroke="#0000ff" stroke-width="1.1"/></g>
<text transform="translate(882.00,545.20) scale(0.842,1)" font-size="12" fill="#000" text-anchor="start" font-weight="normal" >CurrentDensity</text>
</g>
<rect x="937.5" y="421.5" width="16" height="125" fill="#ffffff" stroke="#c2c2c2" stroke-width="1" />
<line x1="937" y1="437.5" x2="954" y2="437.5" stroke="#c2c2c2" stroke-width="1" />
<path d="M941.8,431.8 L945.5,428.2 L949.2,431.8" fill="none" stroke="#555" stroke-width="1.4"/>
<rect x="937.5" y="473.5" width="16" height="18" fill="#dadada" stroke="#a6a6a6" stroke-width="1" />
<rect x="941.5" y="478.4" width="8" height="1.5" fill="#555" />
<rect x="941.5" y="481.2" width="8" height="1.5" fill="#555" />
<rect x="941.5" y="484.0" width="8" height="1.5" fill="#555" />
<rect x="0" y="0" width="3" height="541" fill="#c3d6dd" />
<rect x="483" y="0" width="7" height="541" fill="#c3d6dd" />
<rect x="490" y="0" width="2" height="541" fill="#3a3536" />
<rect x="492" y="0" width="8" height="541" fill="#66c9e8" />
<rect x="963" y="0" width="4" height="541" fill="#66c9e8" /></svg></body></html>
